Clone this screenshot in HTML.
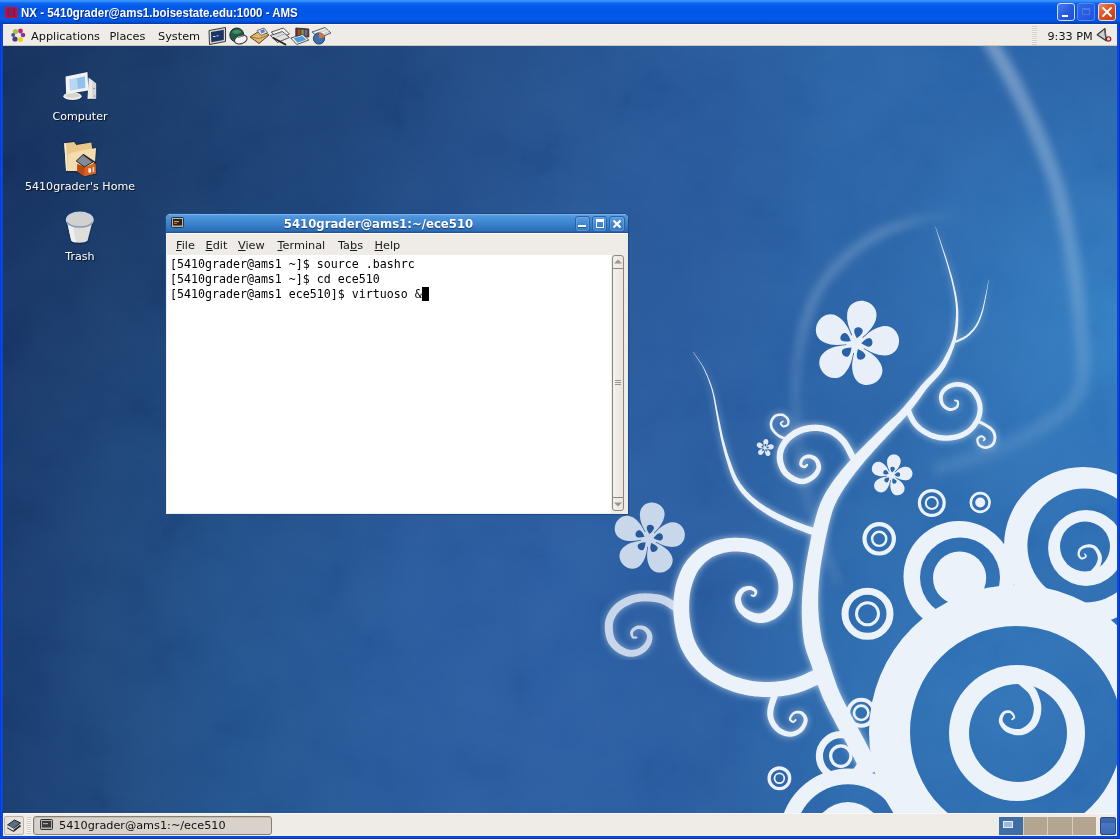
<!DOCTYPE html>
<html lang="en">
<head>
<meta charset="utf-8">
<title>NX - 5410grader@ams1.boisestate.edu:1000 - AMS</title>
<style>
html,body{margin:0;padding:0;}
body{width:1120px;height:839px;overflow:hidden;position:relative;background:#0a3bd0;font-family:"DejaVu Sans","Liberation Sans",sans-serif;}
.abs{position:absolute;}
svg{display:block;}
/* XP outer frame */
#xptitle{left:0;top:0;width:1120px;height:24px;background:linear-gradient(#3b96ff 0,#318af9 1.5px,#0f66ef 3px,#045ae9 6px,#0055e5 12px,#045aec 18px,#0353de 21px,#0243c0 23px,#0138a8 24px);}
#xptitle .t{left:21px;top:5.3px;color:#fff;font:bold 13px "Liberation Sans",sans-serif;white-space:nowrap;text-shadow:1px 1px 0 #0a2a8a;transform:scaleX(0.885);transform-origin:0 0;}
.xb{top:3px;width:18px;height:18px;box-sizing:border-box;border:1px solid #fff;border-radius:3px;}
#frameL{left:0;top:24px;width:3px;height:815px;background:linear-gradient(90deg,#0831d9,#0a4be8 50%,#0a3fd2);}
#frameR{left:1117px;top:24px;width:3px;height:815px;background:linear-gradient(90deg,#0a3fd2,#0a4be8 50%,#0426a8);}
#frameB{left:0;top:836px;width:1120px;height:3px;background:linear-gradient(#0a3fd2,#0a4be8 50%,#0426a8);}
/* desktop */
#desk{left:3px;top:24px;width:1114px;height:812px;overflow:hidden;background:#1d4578;}
#wall{left:-3px;top:-24px;width:1120px;height:839px;}
/* gnome panels */
#ptop{left:3px;top:24px;width:1114px;height:22px;background:#efebe7;box-sizing:border-box;border-top:1px solid #f8f6f4;border-bottom:1px solid #cfc8bf;}
#pbot{left:3px;top:813px;width:1114px;height:23px;background:#efebe7;border-top:1px solid #faf8f6;box-sizing:border-box;}
.ptxt{top:3.6px;font-size:11.3px;line-height:15px;color:#111;white-space:nowrap;}
.dlabel{color:#fff;font-size:11.1px;line-height:14px;white-space:nowrap;text-align:center;width:200px;text-shadow:1px 1px 1px rgba(0,0,0,.75);}
/* terminal window */
#win{left:165px;top:213px;width:463.5px;height:302px;background:#efebe7;border-radius:6px 6px 0 0;box-sizing:border-box;border:1px solid #1d4a84;overflow:hidden;box-shadow:0 0 0 0 #000;}
#wtitle{left:0;top:0;width:462px;height:19px;background:linear-gradient(#9cc4ee 0,#5b9fe2 1px,#4b93db 3px,#3f88d2 8px,#3479c3 13px,#2d6db5 17px,#245b9c 18px,#1f4f8c 19px);}
#wtitle .t{left:0;width:425px;top:2.5px;text-align:center;color:#fff;font-weight:bold;font-size:11.7px;line-height:15px;text-shadow:0 1px 1px #173a6b;}
.wb{top:1.5px;width:15.5px;height:16px;box-sizing:border-box;border:1px solid #2b62a6;border-radius:3px;background:linear-gradient(#5a9de0,#3d82cc 60%,#3a7cc4);box-shadow:inset 0 0 0 1px rgba(140,190,240,.35);}
#wmenu{left:0;top:19px;width:462px;height:23px;background:#efebe7;border-top:1px solid #fff;box-sizing:border-box;}
#wmenu span{position:absolute;top:4px;font-size:11.3px;line-height:15px;color:#1a1a1a;}
#wmenu u{text-decoration:underline;text-underline-offset:1px;}
#term{left:1px;top:41px;width:444.5px;height:258px;background:#fff;}
#term pre{margin:0;position:absolute;left:2.9px;top:2.2px;font:11.63px/14.75px "DejaVu Sans Mono","Liberation Mono",monospace;color:#000;}
#sb{left:445px;top:41px;width:14px;height:258px;background:#efebe7;}
</style>
</head>
<body>
<div id="desk" class="abs"><svg id="wall" class="abs" width="1120" height="839" viewBox="0 0 1120 839">
<!--WALL-->
<defs>
<linearGradient id="bg" gradientUnits="userSpaceOnUse" x1="0" y1="0" x2="1120" y2="0">
<stop offset="0" stop-color="#1b3d70"/><stop offset="0.018" stop-color="#1c3f73"/><stop offset="0.098" stop-color="#214a7f"/><stop offset="0.205" stop-color="#24548f"/><stop offset="0.366" stop-color="#2a5c9e"/><stop offset="0.51" stop-color="#2c5fa3"/><stop offset="0.634" stop-color="#2a5ea1"/><stop offset="0.768" stop-color="#2c66a9"/><stop offset="1" stop-color="#2b65aa"/>
</linearGradient>
<radialGradient id="vg" gradientUnits="userSpaceOnUse" cx="200" cy="0" r="660"><stop offset="0" stop-color="#060a24" stop-opacity="0.27"/><stop offset="0.3" stop-color="#060a24" stop-opacity="0.26"/><stop offset="0.68" stop-color="#060a24" stop-opacity="0.08"/><stop offset="1" stop-color="#060a24" stop-opacity="0"/></radialGradient>
<linearGradient id="sw1" gradientUnits="userSpaceOnUse" x1="1000" y1="40" x2="1030" y2="440"><stop offset="0" stop-color="#fff" stop-opacity="0.34"/><stop offset="0.6" stop-color="#fff" stop-opacity="0.2"/><stop offset="1" stop-color="#fff" stop-opacity="0.09"/></linearGradient>
<linearGradient id="sw2" gradientUnits="userSpaceOnUse" x1="795" y1="425" x2="955" y2="214"><stop offset="0" stop-color="#fff" stop-opacity="0.10"/><stop offset="0.35" stop-color="#fff" stop-opacity="0.2"/><stop offset="0.8" stop-color="#fff" stop-opacity="0.2"/><stop offset="1" stop-color="#fff" stop-opacity="0.02"/></linearGradient>
<radialGradient id="g1" gradientUnits="userSpaceOnUse" cx="1130" cy="330" r="260"><stop offset="0" stop-color="#46aaeb" stop-opacity="0.42"/><stop offset="1" stop-color="#46aaeb" stop-opacity="0"/></radialGradient>
<radialGradient id="g2" gradientUnits="userSpaceOnUse" cx="1000" cy="680" r="300"><stop offset="0" stop-color="#46aaeb" stop-opacity="0.23"/><stop offset="1" stop-color="#46aaeb" stop-opacity="0"/></radialGradient>
<filter id="glow" x="-5%" y="-5%" width="110%" height="110%"><feGaussianBlur stdDeviation="3.8"/></filter>
<filter id="soft" x="-10%" y="-10%" width="120%" height="120%"><feGaussianBlur stdDeviation="4"/></filter>
<filter id="noise" x="0" y="0" width="100%" height="100%"><feTurbulence type="fractalNoise" baseFrequency="0.016" numOctaves="5" seed="11"/><feColorMatrix type="matrix" values="1.6 0 0 0 -0.3  1.6 0 0 0 -0.3  1.6 0 0 0 -0.3  0 0 0 0 1"/></filter>
<mask id="sw" maskUnits="userSpaceOnUse" x="0" y="0" width="1120" height="839"><rect width="1120" height="839" fill="#000"/><circle cx="931.8" cy="503.0" r="12.4" fill="none" stroke="#fff" stroke-width="3.2"/><circle cx="931.8" cy="503.0" r="6.0" fill="none" stroke="#fff" stroke-width="2.0"/><circle cx="980.2" cy="502.5" r="9.4" fill="none" stroke="#fff" stroke-width="2.6"/><circle cx="980.2" cy="502.5" r="5.0" fill="#fff"/><circle cx="879.2" cy="538.8" r="14.7" fill="none" stroke="#fff" stroke-width="4.2"/><circle cx="879.2" cy="538.8" r="7.1" fill="none" stroke="#fff" stroke-width="2.4"/><circle cx="867.5" cy="613.8" r="22.5" fill="none" stroke="#fff" stroke-width="7.0"/><circle cx="867.5" cy="613.8" r="11.0" fill="none" stroke="#fff" stroke-width="3.0"/><circle cx="779.4" cy="778.3" r="10.3" fill="none" stroke="#fff" stroke-width="3.3"/><circle cx="779.4" cy="778.3" r="4.9" fill="none" stroke="#fff" stroke-width="1.8"/><circle cx="840.8" cy="756.1" r="21.4" fill="none" stroke="#fff" stroke-width="7.2"/><circle cx="840.8" cy="756.1" r="10.2" fill="none" stroke="#fff" stroke-width="3.3"/><circle cx="861.2" cy="712.8" r="13.0" fill="none" stroke="#fff" stroke-width="4.0"/><circle cx="861.2" cy="712.8" r="7.2" fill="none" stroke="#fff" stroke-width="2.6"/><circle cx="959.0" cy="576.5" r="55.5" fill="#fff"/><circle cx="960.0" cy="577.5" r="40.0" fill="#000"/><circle cx="959.6" cy="578.0" r="26.6" fill="#fff"/><circle cx="1083.0" cy="546.0" r="79.0" fill="#fff"/><circle cx="1084.4" cy="545.6" r="57.0" fill="#000"/><circle cx="1086.0" cy="548.0" r="37.9" fill="#fff"/><circle cx="1085.0" cy="546.5" r="25.0" fill="#000"/><circle cx="848.0" cy="837.0" r="68.4" fill="#fff"/><circle cx="848.0" cy="837.0" r="52.7" fill="#000"/><circle cx="848.0" cy="837.0" r="35.0" fill="#fff"/><circle cx="1016.0" cy="732.0" r="147.0" fill="#fff"/><circle cx="1016.0" cy="732.0" r="106.0" fill="#000"/><circle cx="1017.0" cy="733.0" r="68.0" fill="#fff"/><circle cx="1018.0" cy="733.0" r="49.0" fill="#000"/><path fill="#fff" d="M1087.9 580.3 L1088.2 580.0 L1088.7 579.6 L1089.2 579.1 L1089.9 578.6 L1090.6 577.9 L1091.4 577.2 L1092.1 576.5 L1092.9 575.8 L1093.6 575.0 L1094.3 574.2 L1095.0 573.4 L1095.6 572.6 L1096.3 571.8 L1097.0 571.0 L1097.7 570.1 L1098.3 569.1 L1098.9 568.2 L1099.5 567.3 L1100.0 566.3 L1100.5 565.3 L1100.8 564.4 L1101.1 563.4 L1101.4 562.5 L1101.6 561.5 L1101.8 560.5 L1101.9 559.6 L1101.9 558.6 L1101.9 557.6 L1101.8 556.6 L1101.6 555.6 L1101.3 554.6 L1100.9 553.5 L1100.4 552.5 L1099.9 551.5 L1099.3 550.5 L1098.7 549.6 L1098.0 548.7 L1097.4 547.8 L1096.6 547.1 L1095.9 546.4 L1095.1 545.8 L1094.3 545.4 L1093.5 545.0 L1092.6 544.7 L1091.7 544.5 L1090.9 544.4 L1090.0 544.3 L1089.2 544.3 L1088.4 544.3 L1087.6 544.4 L1086.7 544.5 L1085.9 544.7 L1085.0 545.0 L1084.1 545.3 L1083.2 545.6 L1082.4 546.0 L1081.6 546.4 L1080.9 546.9 L1080.2 547.4 L1079.6 548.0 L1079.1 548.6 L1078.6 549.3 L1078.3 550.0 L1078.0 550.8 L1077.8 551.5 L1077.6 552.2 L1077.5 553.0 L1077.5 553.7 L1077.5 554.3 L1077.6 555.0 L1077.7 555.6 L1077.9 556.2 L1078.3 556.8 L1078.6 557.3 L1079.0 557.8 L1079.4 558.2 L1079.9 558.6 L1080.4 558.9 L1080.9 559.2 L1081.5 559.4 L1082.1 559.4 L1082.7 559.4 L1083.3 559.2 L1083.9 559.0 L1084.5 558.7 L1085.0 558.4 L1085.5 558.1 L1085.9 557.8 L1086.3 557.5 L1086.6 557.1 L1086.8 556.5 L1086.8 556.0 L1086.7 555.5 L1086.5 555.1 L1086.3 554.8 L1086.0 554.5 L1085.8 554.2 L1085.6 553.9 L1085.5 553.8 L1085.4 553.7 L1084.2 554.3 L1084.3 554.5 L1084.4 554.8 L1084.6 555.0 L1084.8 555.3 L1085.0 555.6 L1085.1 555.8 L1085.2 556.1 L1085.2 556.2 L1085.2 556.2 L1085.2 556.1 L1085.1 556.2 L1084.8 556.4 L1084.5 556.6 L1084.1 556.8 L1083.7 557.1 L1083.2 557.2 L1082.8 557.4 L1082.4 557.4 L1082.1 557.5 L1081.9 557.4 L1081.7 557.3 L1081.5 557.2 L1081.2 557.0 L1080.9 556.7 L1080.6 556.4 L1080.4 556.0 L1080.2 555.7 L1080.0 555.3 L1079.9 555.0 L1079.8 554.6 L1079.8 554.3 L1079.8 553.8 L1079.9 553.2 L1080.0 552.7 L1080.1 552.1 L1080.3 551.6 L1080.6 551.0 L1080.8 550.6 L1081.1 550.2 L1081.4 549.8 L1081.8 549.5 L1082.3 549.2 L1082.9 548.8 L1083.6 548.5 L1084.3 548.2 L1085.0 548.0 L1085.8 547.7 L1086.5 547.6 L1087.2 547.5 L1087.8 547.4 L1088.5 547.4 L1089.1 547.4 L1089.8 547.4 L1090.4 547.5 L1091.1 547.7 L1091.7 547.8 L1092.2 548.0 L1092.8 548.3 L1093.2 548.6 L1093.7 549.0 L1094.2 549.5 L1094.7 550.1 L1095.2 550.8 L1095.7 551.5 L1096.1 552.4 L1096.6 553.2 L1096.9 554.1 L1097.2 554.9 L1097.5 555.7 L1097.6 556.4 L1097.7 557.1 L1097.8 557.8 L1097.8 558.5 L1097.7 559.2 L1097.6 559.9 L1097.4 560.6 L1097.2 561.3 L1096.9 562.0 L1096.7 562.8 L1096.3 563.5 L1096.0 564.2 L1095.6 564.9 L1095.1 565.7 L1094.5 566.4 L1093.9 567.2 L1093.3 568.0 L1092.6 568.7 L1092.0 569.5 L1091.3 570.2 L1090.7 570.8 L1090.1 571.4 L1089.4 571.9 L1088.7 572.5 L1087.9 573.1 L1087.2 573.6 L1086.4 574.1 L1085.7 574.6 L1085.1 575.0 L1084.5 575.4 L1084.1 575.7ZM1084.8 554.0 m-0.7 0 a0.7 0.7 0 1 0 1.4 0 a0.7 0.7 0 1 0 -1.4 0Z M1013.7 680.8 L1014.3 681.2 L1015.1 681.8 L1016.0 682.5 L1016.9 683.2 L1018.0 684.0 L1019.1 684.8 L1020.2 685.6 L1021.2 686.5 L1022.2 687.3 L1023.0 688.0 L1023.9 688.8 L1024.8 689.6 L1025.6 690.3 L1026.4 691.0 L1027.1 691.6 L1027.7 692.3 L1028.3 692.9 L1028.8 693.6 L1029.3 694.3 L1029.8 695.2 L1030.4 696.3 L1030.9 697.5 L1031.5 698.8 L1032.0 700.2 L1032.5 701.6 L1033.0 703.0 L1033.3 704.5 L1033.6 705.9 L1033.8 707.2 L1033.9 708.4 L1033.8 709.7 L1033.7 711.1 L1033.5 712.5 L1033.2 713.9 L1032.9 715.3 L1032.4 716.7 L1032.0 718.0 L1031.4 719.2 L1030.9 720.3 L1030.3 721.3 L1029.6 722.2 L1028.9 723.1 L1028.0 724.1 L1027.1 724.9 L1026.1 725.8 L1025.0 726.5 L1024.0 727.2 L1022.9 727.8 L1021.9 728.3 L1020.9 728.7 L1019.9 728.9 L1018.9 729.0 L1017.7 729.1 L1016.5 729.1 L1015.3 729.0 L1014.0 728.8 L1012.8 728.5 L1011.6 728.2 L1010.6 727.9 L1009.6 727.5 L1008.8 727.1 L1007.9 726.7 L1007.0 726.1 L1006.2 725.4 L1005.4 724.7 L1004.7 724.0 L1004.1 723.2 L1003.5 722.5 L1003.1 721.8 L1002.8 721.2 L1002.7 720.7 L1002.6 720.1 L1002.6 719.4 L1002.7 718.6 L1002.9 717.8 L1003.2 716.9 L1003.5 716.2 L1003.8 715.5 L1004.2 714.9 L1004.5 714.4 L1004.8 714.1 L1005.2 713.8 L1005.7 713.5 L1006.3 713.3 L1006.9 713.1 L1007.5 713.0 L1008.1 712.9 L1008.7 712.9 L1009.2 712.9 L1009.6 713.0 L1009.9 713.1 L1010.4 713.4 L1010.8 713.7 L1011.3 714.2 L1011.8 714.7 L1012.2 715.3 L1012.6 715.8 L1012.9 716.3 L1013.1 716.8 L1013.2 717.0 L1013.3 717.1 L1013.3 717.2 L1013.2 717.3 L1013.0 717.5 L1012.8 717.8 L1012.5 718.0 L1012.2 718.3 L1011.9 718.5 L1011.6 718.7 L1011.5 718.9 L1012.5 720.1 L1012.7 720.0 L1012.9 719.8 L1013.2 719.6 L1013.5 719.4 L1013.9 719.1 L1014.3 718.8 L1014.7 718.4 L1015.0 717.9 L1015.2 717.3 L1015.2 716.6 L1015.0 716.0 L1014.7 715.4 L1014.4 714.7 L1014.0 714.0 L1013.5 713.3 L1013.0 712.7 L1012.5 712.0 L1011.8 711.5 L1011.1 711.0 L1010.4 710.6 L1009.6 710.4 L1008.8 710.3 L1008.0 710.3 L1007.2 710.3 L1006.3 710.4 L1005.4 710.6 L1004.6 710.9 L1003.8 711.3 L1003.0 711.8 L1002.3 712.4 L1001.7 713.1 L1001.1 713.8 L1000.6 714.7 L1000.1 715.6 L999.6 716.6 L999.3 717.7 L999.0 718.8 L998.8 720.0 L998.8 721.2 L999.0 722.4 L999.3 723.5 L999.8 724.6 L1000.4 725.7 L1001.1 726.8 L1001.9 727.9 L1002.8 728.9 L1003.8 730.0 L1004.8 730.9 L1006.0 731.7 L1007.2 732.5 L1008.5 733.1 L1009.8 733.6 L1011.2 734.1 L1012.7 734.6 L1014.3 734.9 L1015.9 735.2 L1017.6 735.3 L1019.2 735.3 L1020.9 735.2 L1022.5 734.9 L1024.1 734.5 L1025.6 733.9 L1027.2 733.2 L1028.7 732.4 L1030.2 731.5 L1031.6 730.5 L1033.0 729.4 L1034.2 728.2 L1035.4 726.9 L1036.5 725.5 L1037.4 724.0 L1038.3 722.4 L1039.0 720.8 L1039.6 719.1 L1040.1 717.3 L1040.6 715.5 L1040.9 713.7 L1041.1 711.9 L1041.3 710.1 L1041.3 708.4 L1041.3 706.6 L1041.1 704.7 L1040.8 702.9 L1040.4 701.1 L1039.9 699.4 L1039.4 697.7 L1038.8 696.0 L1038.2 694.4 L1037.6 693.0 L1037.0 691.6 L1036.3 690.2 L1035.5 689.0 L1034.6 687.8 L1033.8 686.8 L1032.9 685.9 L1032.1 685.0 L1031.2 684.2 L1030.5 683.5 L1029.7 682.7 L1029.0 682.0 L1028.1 681.0 L1027.1 680.0 L1026.1 679.0 L1025.1 678.0 L1024.1 677.0 L1023.1 676.0 L1022.2 675.1 L1021.4 674.4 L1020.8 673.7 L1020.3 673.2ZM1012.0 719.5 m-0.8 0 a0.8 0.8 0 1 0 1.6 0 a0.8 0.8 0 1 0 -1.6 0Z"/></mask><path id="sp" d="M935.2 226.5 L935.5 227.6 L935.9 228.8 L936.4 230.3 L936.9 232.0 L937.5 233.8 L938.1 235.7 L938.7 237.7 L939.4 239.8 L940.0 241.8 L940.6 243.7 L941.2 245.7 L941.9 247.7 L942.5 249.8 L943.2 251.9 L943.8 254.0 L944.5 256.2 L945.2 258.4 L945.8 260.5 L946.5 262.7 L947.1 264.8 L947.7 266.9 L948.3 269.0 L948.9 271.2 L949.5 273.3 L950.0 275.4 L950.6 277.5 L951.1 279.6 L951.6 281.7 L952.1 283.8 L952.6 285.8 L953.0 287.8 L953.4 289.8 L953.8 291.7 L954.1 293.6 L954.5 295.6 L954.8 297.4 L955.0 299.3 L955.3 301.2 L955.5 303.0 L955.7 304.8 L955.8 306.6 L955.9 308.3 L956.0 310.1 L956.0 311.8 L956.0 313.4 L956.0 315.1 L955.9 316.8 L955.8 318.4 L955.7 320.1 L955.6 321.8 L955.4 323.5 L955.3 325.2 L955.1 326.9 L954.8 328.7 L954.6 330.4 L954.3 332.1 L953.9 333.7 L953.6 335.4 L953.2 337.0 L952.8 338.6 L952.3 340.1 L951.8 341.6 L951.3 343.1 L950.7 344.6 L950.1 346.1 L949.5 347.5 L948.8 349.0 L948.1 350.4 L947.4 351.9 L946.7 353.3 L945.9 354.8 L945.1 356.3 L944.3 357.8 L943.5 359.3 L942.7 360.7 L941.8 362.2 L940.9 363.6 L939.9 365.1 L938.8 366.5 L937.8 367.9 L936.6 369.3 L935.3 370.8 L933.9 372.2 L932.5 373.7 L931.0 375.2 L929.4 376.7 L927.9 378.2 L926.4 379.8 L924.8 381.4 L923.4 383.0 L922.0 384.5 L920.7 386.1 L919.4 387.7 L918.2 389.2 L917.0 390.8 L915.8 392.3 L914.6 393.9 L913.4 395.3 L912.2 396.8 L911.0 398.3 L909.8 399.7 L908.5 401.2 L907.3 402.6 L906.1 404.0 L904.9 405.5 L903.7 406.9 L902.5 408.2 L901.3 409.6 L900.1 410.9 L898.9 412.1 L897.8 413.3 L896.7 414.4 L895.6 415.4 L894.5 416.4 L893.4 417.4 L892.3 418.5 L891.0 419.6 L889.7 420.8 L888.3 422.1 L886.8 423.5 L885.1 425.1 L883.3 426.8 L881.4 428.7 L879.4 430.6 L877.4 432.5 L875.3 434.5 L873.3 436.5 L871.3 438.4 L869.4 440.3 L867.6 442.1 L865.9 443.7 L864.3 445.4 L862.7 446.9 L861.2 448.5 L859.7 450.0 L858.3 451.5 L856.8 453.0 L855.4 454.5 L854.0 456.0 L852.6 457.6 L851.2 459.1 L849.8 460.7 L848.4 462.3 L847.0 463.8 L845.6 465.4 L844.3 467.0 L843.0 468.6 L841.7 470.1 L840.5 471.6 L839.2 473.2 L838.1 474.7 L836.9 476.1 L835.8 477.6 L834.7 479.1 L833.6 480.5 L832.5 482.0 L831.5 483.4 L830.5 484.9 L829.5 486.4 L828.5 487.9 L827.6 489.4 L826.7 490.8 L825.9 492.3 L825.0 493.8 L824.2 495.3 L823.4 496.8 L822.7 498.3 L821.9 499.9 L821.2 501.5 L820.5 503.1 L819.8 504.7 L819.2 506.4 L818.6 508.0 L818.1 509.6 L817.5 511.3 L817.0 512.9 L816.5 514.7 L816.0 516.4 L815.5 518.3 L815.0 520.2 L814.5 522.3 L813.9 524.4 L813.4 526.6 L812.9 528.8 L812.4 531.1 L811.9 533.5 L811.4 535.9 L810.9 538.4 L810.4 541.0 L809.9 543.6 L809.4 546.3 L808.8 549.1 L808.2 552.0 L807.7 555.0 L807.1 558.1 L806.5 561.2 L806.0 564.4 L805.5 567.6 L805.0 570.9 L804.5 574.2 L804.1 577.4 L803.7 580.7 L803.4 584.0 L803.0 587.4 L802.7 590.9 L802.4 594.3 L802.1 597.8 L802.0 601.2 L801.8 604.7 L801.8 608.1 L801.7 611.5 L801.8 615.0 L801.9 618.4 L802.0 621.9 L802.2 625.4 L802.4 628.8 L802.7 632.1 L803.1 635.4 L803.5 638.6 L803.9 641.6 L804.5 644.6 L805.2 647.3 L805.9 649.9 L806.6 652.3 L807.4 654.6 L808.2 656.8 L809.1 659.0 L809.9 661.1 L810.7 663.4 L811.6 665.8 L812.4 668.5 L813.4 671.3 L814.3 674.3 L815.4 677.4 L816.4 680.6 L817.5 683.8 L818.6 687.0 L819.8 690.2 L821.0 693.3 L822.2 696.4 L823.5 699.4 L824.9 702.3 L826.3 705.2 L827.7 708.1 L829.1 710.9 L830.5 713.6 L831.9 716.2 L833.3 718.7 L834.5 721.1 L835.7 723.4 L836.9 725.7 L838.0 727.8 L839.1 729.8 L840.1 731.7 L841.2 733.6 L842.2 735.4 L843.2 737.3 L844.2 739.1 L845.2 741.1 L846.3 743.1 L847.4 745.3 L848.6 747.6 L849.9 750.1 L851.1 752.6 L852.4 755.1 L853.7 757.6 L854.9 760.0 L856.0 762.3 L857.1 764.3 L858.0 766.2 L858.9 767.9 L859.7 769.4 L860.5 770.8 L861.2 772.1 L861.9 773.3 L862.4 774.3 L863.0 775.3 L863.4 776.1 L863.8 776.8 L864.1 777.3 L879.9 768.7 L879.5 768.0 L879.2 767.3 L878.7 766.5 L878.2 765.6 L877.6 764.6 L877.0 763.5 L876.4 762.2 L875.6 760.9 L874.8 759.4 L874.0 757.8 L873.0 756.0 L871.9 754.0 L870.7 751.8 L869.5 749.4 L868.2 746.9 L866.8 744.5 L865.5 742.0 L864.2 739.5 L862.9 737.1 L861.7 734.9 L860.6 732.8 L859.5 730.8 L858.5 728.9 L857.5 727.1 L856.5 725.2 L855.5 723.4 L854.5 721.5 L853.5 719.6 L852.4 717.6 L851.3 715.4 L850.0 713.0 L848.7 710.5 L847.4 708.0 L846.0 705.4 L844.6 702.8 L843.3 700.2 L842.0 697.6 L840.7 694.9 L839.5 692.3 L838.4 689.6 L837.3 686.9 L836.2 684.1 L835.2 681.1 L834.2 678.1 L833.1 675.0 L832.2 671.9 L831.2 668.9 L830.3 665.9 L829.3 663.0 L828.4 660.2 L827.6 657.5 L826.7 655.1 L825.9 652.8 L825.1 650.7 L824.4 648.7 L823.8 646.7 L823.2 644.8 L822.7 642.8 L822.1 640.7 L821.7 638.4 L821.2 635.8 L820.7 633.0 L820.3 630.0 L819.8 627.0 L819.5 623.9 L819.1 620.7 L818.8 617.5 L818.6 614.3 L818.4 611.1 L818.2 607.9 L818.2 604.8 L818.1 601.6 L818.2 598.4 L818.2 595.2 L818.3 591.9 L818.5 588.6 L818.7 585.4 L818.9 582.2 L819.2 579.0 L819.5 575.8 L819.8 572.8 L820.1 569.7 L820.6 566.7 L821.0 563.7 L821.5 560.6 L822.0 557.7 L822.6 554.7 L823.1 551.9 L823.6 549.1 L824.1 546.4 L824.6 543.8 L825.1 541.3 L825.6 538.8 L826.1 536.5 L826.6 534.2 L827.1 532.0 L827.6 529.8 L828.1 527.7 L828.5 525.7 L829.0 523.8 L829.5 521.9 L829.9 520.1 L830.4 518.5 L830.8 516.9 L831.2 515.4 L831.6 513.9 L832.0 512.5 L832.5 511.1 L833.0 509.7 L833.5 508.3 L834.0 506.9 L834.6 505.6 L835.2 504.2 L835.8 502.9 L836.5 501.6 L837.1 500.3 L837.8 499.0 L838.5 497.6 L839.3 496.3 L840.1 494.9 L840.9 493.5 L841.7 492.2 L842.5 490.8 L843.4 489.4 L844.3 488.0 L845.3 486.6 L846.3 485.2 L847.3 483.8 L848.3 482.3 L849.4 480.8 L850.4 479.3 L851.6 477.8 L852.7 476.3 L853.9 474.7 L855.1 473.1 L856.3 471.6 L857.6 470.0 L858.9 468.4 L860.1 466.8 L861.4 465.2 L862.7 463.7 L864.0 462.1 L865.3 460.6 L866.6 459.1 L867.9 457.5 L869.3 456.0 L870.7 454.4 L872.1 452.7 L873.6 451.1 L875.2 449.3 L876.9 447.5 L878.6 445.6 L880.5 443.5 L882.4 441.5 L884.3 439.4 L886.3 437.3 L888.1 435.3 L889.9 433.4 L891.6 431.5 L893.2 429.9 L894.6 428.4 L895.9 427.0 L897.1 425.8 L898.2 424.6 L899.3 423.5 L900.4 422.4 L901.5 421.2 L902.6 420.1 L903.7 418.8 L904.9 417.5 L906.1 416.1 L907.2 414.7 L908.4 413.2 L909.6 411.8 L910.8 410.3 L911.9 408.8 L913.1 407.3 L914.3 405.8 L915.4 404.3 L916.6 402.7 L917.8 401.2 L919.0 399.6 L920.1 398.0 L921.2 396.4 L922.4 394.8 L923.5 393.3 L924.6 391.7 L925.8 390.1 L927.0 388.6 L928.2 387.0 L929.5 385.5 L930.8 384.0 L932.3 382.5 L933.7 380.9 L935.2 379.4 L936.7 377.8 L938.2 376.2 L939.6 374.6 L941.0 372.9 L942.2 371.3 L943.4 369.6 L944.4 368.0 L945.4 366.4 L946.3 364.8 L947.1 363.2 L947.9 361.6 L948.6 360.0 L949.4 358.4 L950.1 356.8 L950.7 355.3 L951.4 353.7 L952.0 352.1 L952.6 350.6 L953.2 349.0 L953.8 347.5 L954.3 345.9 L954.8 344.3 L955.2 342.7 L955.7 341.1 L956.0 339.4 L956.4 337.7 L956.7 336.0 L957.0 334.3 L957.3 332.5 L957.5 330.8 L957.7 329.0 L957.8 327.2 L958.0 325.5 L958.1 323.7 L958.2 322.0 L958.3 320.3 L958.3 318.5 L958.3 316.8 L958.3 315.1 L958.3 313.4 L958.3 311.7 L958.2 310.0 L958.1 308.2 L957.9 306.4 L957.7 304.6 L957.5 302.8 L957.3 300.9 L957.0 299.0 L956.7 297.1 L956.3 295.2 L956.0 293.3 L955.6 291.4 L955.1 289.4 L954.7 287.4 L954.2 285.4 L953.7 283.4 L953.2 281.3 L952.7 279.2 L952.1 277.1 L951.5 275.0 L950.9 272.9 L950.2 270.8 L949.6 268.6 L949.0 266.5 L948.3 264.4 L947.7 262.3 L947.0 260.2 L946.3 258.0 L945.6 255.8 L944.9 253.7 L944.1 251.6 L943.4 249.5 L942.7 247.4 L942.0 245.4 L941.4 243.5 L940.7 241.5 L940.0 239.5 L939.3 237.5 L938.6 235.6 L938.0 233.7 L937.3 231.8 L936.8 230.2 L936.2 228.7 L935.8 227.4 L935.4 226.5Z M988.6 279.9 L988.4 280.8 L988.2 281.9 L987.9 283.3 L987.6 284.8 L987.3 286.4 L987.0 288.2 L986.6 289.9 L986.2 291.7 L985.9 293.5 L985.5 295.1 L985.1 296.8 L984.8 298.5 L984.4 300.2 L984.0 302.0 L983.6 303.8 L983.2 305.5 L982.8 307.2 L982.3 308.9 L981.9 310.6 L981.4 312.1 L980.9 313.6 L980.4 315.0 L979.9 316.4 L979.3 317.8 L978.8 319.1 L978.2 320.4 L977.6 321.7 L977.0 322.9 L976.3 324.1 L975.6 325.2 L974.8 326.4 L974.0 327.5 L973.1 328.7 L972.2 329.7 L971.2 330.8 L970.2 331.8 L969.3 332.8 L968.2 333.7 L967.2 334.6 L966.2 335.4 L965.1 336.1 L963.9 336.8 L962.7 337.5 L961.3 338.1 L960.0 338.7 L958.7 339.2 L957.5 339.7 L956.5 340.2 L955.5 340.5 L954.8 340.9 L955.8 342.9 L956.5 342.6 L957.3 342.2 L958.4 341.8 L959.6 341.3 L960.9 340.7 L962.2 340.1 L963.6 339.4 L965.0 338.6 L966.2 337.8 L967.4 337.0 L968.5 336.1 L969.5 335.2 L970.6 334.2 L971.6 333.1 L972.6 332.1 L973.6 330.9 L974.5 329.8 L975.4 328.6 L976.2 327.4 L977.0 326.2 L977.8 324.9 L978.4 323.6 L979.1 322.4 L979.6 321.0 L980.2 319.7 L980.7 318.3 L981.2 316.9 L981.7 315.5 L982.2 314.0 L982.6 312.5 L983.1 310.9 L983.5 309.2 L983.9 307.5 L984.3 305.8 L984.6 304.0 L985.0 302.2 L985.3 300.4 L985.7 298.7 L986.0 296.9 L986.3 295.3 L986.6 293.6 L986.9 291.8 L987.2 290.1 L987.5 288.3 L987.8 286.5 L988.1 284.9 L988.3 283.3 L988.5 282.0 L988.7 280.8 L988.8 279.9Z M693.2 352.3 L693.8 353.3 L694.6 354.5 L695.6 355.9 L696.7 357.5 L697.9 359.3 L699.2 361.2 L700.4 363.1 L701.6 365.1 L702.7 367.0 L703.7 369.0 L704.6 370.9 L705.5 372.9 L706.4 375.0 L707.3 377.1 L708.1 379.3 L708.9 381.5 L709.7 383.7 L710.5 385.9 L711.2 388.2 L711.8 390.5 L712.4 392.7 L713.0 395.1 L713.4 397.4 L713.9 399.8 L714.3 402.2 L714.7 404.7 L715.1 407.1 L715.5 409.5 L715.9 412.0 L716.3 414.4 L716.8 416.8 L717.2 419.2 L717.6 421.6 L718.1 424.0 L718.5 426.4 L718.9 428.9 L719.4 431.3 L719.9 433.6 L720.3 436.0 L720.8 438.3 L721.3 440.5 L721.8 442.8 L722.3 444.9 L722.9 447.1 L723.4 449.3 L723.9 451.4 L724.5 453.5 L725.1 455.7 L725.7 457.8 L726.4 460.0 L727.1 462.2 L727.7 464.4 L728.4 466.6 L729.1 468.9 L729.9 471.2 L730.7 473.4 L731.5 475.6 L732.4 477.8 L733.4 479.9 L734.4 481.9 L735.5 483.9 L736.6 485.8 L737.8 487.6 L739.0 489.4 L740.3 491.2 L741.6 492.9 L743.0 494.6 L744.5 496.2 L746.0 497.8 L747.6 499.5 L749.3 501.1 L751.1 502.7 L752.9 504.3 L754.8 505.9 L756.8 507.4 L758.8 508.9 L760.8 510.3 L762.8 511.7 L764.9 513.1 L766.9 514.5 L769.0 515.7 L771.1 517.0 L773.2 518.2 L775.4 519.3 L777.6 520.5 L779.7 521.6 L781.9 522.6 L784.1 523.7 L786.3 524.7 L788.6 525.7 L791.0 526.8 L793.5 527.9 L796.2 528.9 L798.9 530.0 L801.6 531.0 L804.1 532.0 L806.5 532.9 L808.6 533.7 L810.4 534.3 L811.7 534.9 L814.3 528.1 L812.9 527.6 L811.0 527.0 L808.9 526.2 L806.5 525.4 L804.0 524.5 L801.3 523.6 L798.7 522.6 L796.0 521.6 L793.5 520.6 L791.2 519.7 L789.0 518.7 L786.8 517.8 L784.6 516.8 L782.5 515.8 L780.3 514.8 L778.2 513.8 L776.2 512.7 L774.1 511.6 L772.1 510.5 L770.1 509.3 L768.1 508.1 L766.0 506.9 L764.0 505.6 L762.1 504.2 L760.1 502.9 L758.2 501.5 L756.3 500.1 L754.5 498.6 L752.8 497.2 L751.2 495.7 L749.6 494.2 L748.2 492.8 L746.7 491.3 L745.4 489.8 L744.1 488.2 L742.8 486.6 L741.6 485.0 L740.4 483.4 L739.3 481.6 L738.2 479.9 L737.1 478.0 L736.1 476.1 L735.2 474.1 L734.3 472.0 L733.4 469.8 L732.6 467.7 L731.8 465.5 L731.0 463.3 L730.2 461.1 L729.4 459.0 L728.7 456.9 L728.0 454.8 L727.3 452.7 L726.7 450.6 L726.1 448.5 L725.5 446.4 L724.9 444.3 L724.3 442.1 L723.7 440.0 L723.2 437.7 L722.6 435.5 L722.1 433.2 L721.6 430.8 L721.1 428.4 L720.6 426.1 L720.1 423.6 L719.6 421.2 L719.1 418.8 L718.6 416.4 L718.1 414.0 L717.6 411.6 L717.1 409.2 L716.7 406.8 L716.2 404.4 L715.8 402.0 L715.3 399.6 L714.8 397.2 L714.2 394.8 L713.6 392.4 L713.0 390.1 L712.3 387.9 L711.5 385.6 L710.7 383.3 L709.9 381.1 L709.0 378.9 L708.1 376.8 L707.2 374.6 L706.2 372.6 L705.3 370.6 L704.3 368.6 L703.3 366.7 L702.1 364.7 L700.9 362.8 L699.6 360.9 L698.3 359.0 L697.1 357.3 L696.0 355.7 L694.9 354.3 L694.1 353.1 L693.4 352.1Z M816.0 669.1 L814.6 669.8 L812.7 670.6 L810.6 671.6 L808.2 672.6 L805.7 673.8 L803.1 674.9 L800.6 676.0 L798.0 677.0 L795.7 677.8 L793.6 678.5 L791.5 679.1 L789.4 679.6 L787.4 680.0 L785.3 680.4 L783.2 680.8 L781.1 681.1 L779.0 681.3 L776.9 681.5 L774.8 681.7 L772.5 681.8 L770.3 681.9 L768.0 681.9 L765.8 682.0 L763.5 681.9 L761.2 681.8 L758.9 681.7 L756.7 681.5 L754.4 681.2 L752.2 680.9 L750.0 680.5 L747.7 680.1 L745.5 679.6 L743.2 679.0 L740.9 678.3 L738.6 677.6 L736.3 676.9 L734.0 676.0 L731.8 675.2 L729.7 674.2 L727.6 673.2 L725.5 672.2 L723.3 671.0 L721.2 669.8 L719.2 668.6 L717.1 667.3 L715.2 665.9 L713.3 664.5 L711.5 663.1 L709.8 661.6 L708.2 660.2 L706.6 658.6 L705.1 657.0 L703.7 655.4 L702.4 653.7 L701.1 651.9 L699.8 650.1 L698.7 648.3 L697.6 646.5 L696.6 644.6 L695.7 642.7 L694.9 640.8 L694.1 638.8 L693.4 636.7 L692.8 634.5 L692.2 632.3 L691.7 630.0 L691.2 627.7 L690.8 625.4 L690.4 623.1 L690.1 620.8 L689.8 618.7 L689.5 616.6 L689.4 614.5 L689.2 612.5 L689.2 610.4 L689.1 608.4 L689.1 606.3 L689.2 604.3 L689.2 602.4 L689.3 600.5 L689.5 598.7 L689.6 596.9 L689.8 595.3 L690.0 593.7 L690.3 592.1 L690.6 590.5 L690.9 589.0 L691.3 587.5 L691.7 586.0 L692.2 584.4 L692.7 582.8 L693.3 581.1 L693.8 579.5 L694.5 577.9 L695.1 576.4 L695.8 574.9 L696.5 573.4 L697.3 572.0 L698.1 570.7 L698.9 569.4 L699.9 568.2 L700.9 566.9 L702.0 565.7 L703.1 564.4 L704.3 563.2 L705.6 562.1 L706.9 561.0 L708.2 559.9 L709.5 559.0 L710.7 558.1 L712.0 557.3 L713.4 556.6 L714.8 555.9 L716.2 555.3 L717.7 554.7 L719.2 554.2 L720.8 553.7 L722.4 553.2 L724.0 552.8 L725.6 552.5 L727.2 552.2 L728.8 552.0 L730.5 551.8 L732.1 551.6 L733.8 551.6 L735.5 551.5 L737.2 551.5 L738.9 551.6 L740.6 551.7 L742.2 551.9 L743.8 552.1 L745.4 552.3 L747.0 552.6 L748.5 552.9 L750.1 553.3 L751.5 553.7 L753.0 554.1 L754.4 554.6 L755.8 555.2 L757.1 555.8 L758.3 556.4 L759.6 557.1 L760.9 557.9 L762.2 558.8 L763.5 559.7 L764.7 560.6 L765.9 561.6 L767.1 562.6 L768.1 563.5 L769.1 564.5 L770.0 565.5 L770.9 566.5 L771.7 567.5 L772.4 568.5 L773.1 569.5 L773.8 570.6 L774.4 571.7 L775.0 572.7 L775.5 573.8 L776.0 574.9 L776.4 576.0 L776.8 577.0 L777.1 578.2 L777.5 579.3 L777.7 580.5 L778.0 581.7 L778.1 582.9 L778.3 584.0 L778.4 585.2 L778.5 586.4 L778.5 587.6 L778.4 588.8 L778.4 590.0 L778.3 591.2 L778.1 592.4 L777.9 593.6 L777.7 594.8 L777.4 595.9 L777.1 597.0 L776.7 598.0 L776.3 598.9 L775.9 599.9 L775.3 600.9 L774.7 601.9 L774.1 603.0 L773.4 603.9 L772.6 604.9 L771.9 605.8 L771.1 606.7 L770.4 607.4 L769.6 608.2 L768.8 608.9 L768.0 609.6 L767.1 610.3 L766.2 610.9 L765.3 611.4 L764.5 611.9 L763.6 612.4 L762.7 612.7 L762.0 613.0 L761.2 613.2 L760.4 613.3 L759.5 613.4 L758.6 613.4 L757.7 613.4 L756.8 613.3 L755.8 613.2 L754.9 613.0 L753.9 612.7 L753.0 612.5 L752.1 612.1 L751.1 611.8 L750.1 611.3 L749.1 610.8 L748.1 610.2 L747.2 609.6 L746.3 609.0 L745.5 608.4 L744.8 607.7 L744.1 607.1 L743.6 606.5 L743.1 605.8 L742.6 605.0 L742.2 604.2 L741.9 603.3 L741.6 602.5 L741.3 601.6 L741.2 600.8 L741.1 600.1 L741.0 599.4 L741.0 598.8 L741.1 598.1 L741.2 597.4 L741.5 596.6 L741.8 595.8 L742.1 595.1 L742.5 594.3 L743.0 593.6 L743.4 593.0 L743.8 592.5 L744.2 592.1 L744.7 591.7 L745.3 591.3 L746.0 591.0 L746.7 590.7 L747.4 590.4 L748.1 590.2 L748.8 590.0 L749.4 589.9 L749.9 589.9 L750.3 589.9 L750.8 590.0 L751.3 590.1 L751.9 590.4 L752.5 590.7 L753.0 591.0 L753.5 591.3 L753.9 591.6 L754.2 591.9 L754.4 592.1 L754.4 592.1 L754.5 592.3 L754.5 592.5 L754.5 592.9 L754.4 593.3 L754.2 593.7 L754.0 594.1 L753.8 594.5 L753.7 594.7 L753.6 594.9 L753.7 594.9 L753.7 594.9 L753.6 594.9 L753.4 594.9 L753.1 594.8 L752.8 594.8 L752.5 594.7 L752.2 594.6 L752.0 594.5 L751.7 594.4 L751.3 596.2 L751.4 596.2 L751.6 596.3 L751.8 596.4 L752.2 596.6 L752.5 596.7 L752.9 596.8 L753.4 596.9 L753.9 597.0 L754.5 596.8 L755.0 596.5 L755.4 596.2 L755.7 595.8 L756.1 595.4 L756.4 594.9 L756.7 594.3 L757.0 593.7 L757.2 593.0 L757.3 592.3 L757.3 591.5 L757.0 590.7 L756.7 590.1 L756.2 589.5 L755.7 588.9 L755.1 588.3 L754.4 587.8 L753.7 587.2 L752.9 586.8 L752.0 586.4 L751.1 586.1 L750.1 585.9 L749.2 585.9 L748.2 585.9 L747.3 586.0 L746.3 586.2 L745.2 586.4 L744.2 586.7 L743.2 587.1 L742.2 587.6 L741.3 588.2 L740.4 588.9 L739.6 589.6 L738.8 590.4 L738.1 591.3 L737.4 592.3 L736.8 593.3 L736.2 594.3 L735.7 595.5 L735.3 596.7 L735.0 597.9 L734.8 599.2 L734.8 600.4 L734.8 601.7 L735.0 602.9 L735.3 604.2 L735.7 605.5 L736.1 606.7 L736.6 608.0 L737.2 609.2 L737.9 610.3 L738.7 611.5 L739.5 612.6 L740.5 613.6 L741.5 614.6 L742.6 615.6 L743.7 616.5 L744.9 617.4 L746.1 618.2 L747.3 619.0 L748.6 619.7 L749.8 620.3 L751.1 620.9 L752.3 621.4 L753.6 621.8 L755.0 622.2 L756.4 622.5 L757.8 622.8 L759.3 622.9 L760.8 623.0 L762.3 623.0 L763.8 622.8 L765.4 622.6 L766.9 622.2 L768.4 621.8 L769.9 621.2 L771.3 620.6 L772.8 619.9 L774.2 619.2 L775.6 618.4 L776.9 617.5 L778.2 616.6 L779.5 615.5 L780.7 614.5 L781.9 613.3 L783.1 612.1 L784.2 610.8 L785.3 609.4 L786.3 608.0 L787.3 606.6 L788.2 605.0 L789.1 603.4 L789.8 601.8 L790.5 600.2 L791.0 598.5 L791.5 596.8 L791.9 595.1 L792.3 593.3 L792.5 591.6 L792.7 589.8 L792.9 588.1 L793.0 586.4 L793.0 584.7 L792.9 583.0 L792.8 581.2 L792.6 579.5 L792.3 577.7 L792.0 576.0 L791.5 574.2 L791.0 572.5 L790.5 570.8 L789.8 569.1 L789.1 567.5 L788.3 565.9 L787.4 564.3 L786.5 562.7 L785.5 561.2 L784.4 559.7 L783.3 558.3 L782.1 556.8 L780.8 555.4 L779.5 554.1 L778.1 552.8 L776.6 551.5 L775.1 550.3 L773.5 549.0 L771.9 547.9 L770.2 546.7 L768.4 545.7 L766.6 544.7 L764.8 543.7 L762.9 542.8 L761.1 542.1 L759.2 541.4 L757.3 540.7 L755.3 540.2 L753.4 539.7 L751.4 539.3 L749.5 538.9 L747.5 538.6 L745.5 538.3 L743.6 538.1 L741.6 538.0 L739.6 537.9 L737.5 537.8 L735.5 537.8 L733.4 537.8 L731.3 537.9 L729.2 538.1 L727.1 538.3 L725.0 538.6 L723.0 538.9 L721.0 539.3 L719.0 539.8 L717.0 540.3 L715.0 540.8 L713.0 541.5 L711.1 542.2 L709.1 543.0 L707.1 543.9 L705.2 544.8 L703.3 545.9 L701.4 547.1 L699.6 548.3 L697.8 549.6 L696.1 551.0 L694.4 552.4 L692.8 554.0 L691.2 555.5 L689.7 557.2 L688.2 558.8 L686.9 560.6 L685.6 562.4 L684.3 564.2 L683.2 566.1 L682.2 568.1 L681.2 570.0 L680.3 571.9 L679.5 573.9 L678.8 575.8 L678.1 577.7 L677.4 579.6 L676.8 581.5 L676.3 583.5 L675.7 585.4 L675.3 587.3 L674.9 589.3 L674.6 591.3 L674.3 593.3 L674.0 595.3 L673.8 597.4 L673.7 599.5 L673.5 601.7 L673.5 603.9 L673.4 606.2 L673.4 608.5 L673.4 610.8 L673.5 613.3 L673.7 615.7 L673.9 618.2 L674.2 620.7 L674.5 623.2 L674.9 625.6 L675.4 628.1 L675.8 630.7 L676.4 633.3 L677.0 636.0 L677.7 638.7 L678.5 641.4 L679.4 644.1 L680.4 646.7 L681.5 649.3 L682.8 651.8 L684.1 654.1 L685.5 656.5 L687.0 658.8 L688.6 661.0 L690.2 663.2 L692.0 665.3 L693.8 667.3 L695.7 669.3 L697.6 671.2 L699.7 673.1 L701.9 674.9 L704.1 676.7 L706.5 678.3 L708.8 679.9 L711.2 681.4 L713.7 682.9 L716.1 684.2 L718.6 685.5 L721.0 686.8 L723.5 687.9 L726.1 689.0 L728.7 690.0 L731.3 691.0 L734.0 691.9 L736.6 692.7 L739.3 693.5 L741.9 694.1 L744.6 694.7 L747.2 695.3 L749.9 695.7 L752.5 696.1 L755.2 696.4 L757.8 696.6 L760.5 696.8 L763.1 696.9 L765.7 697.0 L768.2 696.9 L770.8 696.9 L773.3 696.8 L775.7 696.7 L778.2 696.5 L780.6 696.2 L783.1 696.0 L785.5 695.6 L787.9 695.2 L790.4 694.7 L792.8 694.2 L795.3 693.6 L797.8 692.9 L800.5 692.0 L803.4 691.0 L806.2 689.9 L809.1 688.7 L811.8 687.5 L814.4 686.3 L816.8 685.2 L818.9 684.2 L820.7 683.5 L822.0 682.9ZM751.5 595.3 m-0.9 0 a0.9 0.9 0 1 0 1.8 0 a0.9 0.9 0 1 0 -1.8 0Z M772.9 691.0 L772.6 691.9 L772.1 693.2 L771.6 694.8 L771.0 696.6 L770.3 698.5 L769.6 700.5 L769.0 702.5 L768.4 704.5 L768.0 706.4 L767.6 708.1 L767.4 709.6 L767.3 710.9 L767.2 712.3 L767.2 713.6 L767.3 714.9 L767.4 716.1 L767.6 717.4 L767.9 718.6 L768.3 719.8 L768.7 721.0 L769.2 722.2 L769.8 723.5 L770.5 724.7 L771.2 725.9 L772.0 727.1 L772.9 728.2 L773.9 729.3 L774.8 730.3 L775.9 731.3 L776.9 732.1 L778.1 732.9 L779.3 733.7 L780.5 734.3 L781.8 734.9 L783.1 735.5 L784.5 735.9 L785.9 736.3 L787.3 736.6 L788.6 736.8 L790.0 736.8 L791.4 736.7 L792.7 736.5 L794.1 736.2 L795.4 735.8 L796.7 735.2 L797.9 734.7 L799.1 734.0 L800.2 733.3 L801.3 732.5 L802.2 731.7 L803.1 730.7 L804.0 729.7 L804.7 728.5 L805.4 727.3 L806.1 726.1 L806.6 724.9 L807.0 723.6 L807.4 722.4 L807.6 721.2 L807.7 720.1 L807.6 718.9 L807.3 717.8 L806.9 716.7 L806.4 715.7 L805.8 714.8 L805.1 714.0 L804.4 713.2 L803.7 712.6 L803.0 712.0 L802.2 711.5 L801.4 711.1 L800.5 710.9 L799.6 710.7 L798.7 710.7 L797.8 710.7 L796.9 710.7 L796.1 710.9 L795.2 711.1 L794.4 711.4 L793.7 711.7 L793.0 712.2 L792.3 712.8 L791.7 713.4 L791.1 714.1 L790.6 714.8 L790.1 715.6 L789.7 716.3 L789.3 717.1 L789.1 717.8 L788.9 718.5 L788.9 719.2 L789.1 719.9 L789.4 720.5 L789.8 721.0 L790.3 721.5 L790.7 721.9 L791.2 722.3 L791.7 722.6 L792.2 722.8 L792.7 723.0 L793.3 723.0 L793.9 722.8 L794.4 722.5 L794.8 722.2 L795.1 721.9 L795.4 721.6 L795.7 721.3 L796.0 721.0 L796.2 720.8 L796.3 720.7 L795.1 719.3 L794.9 719.5 L794.7 719.7 L794.4 720.0 L794.1 720.3 L793.8 720.5 L793.6 720.7 L793.3 720.9 L793.1 721.0 L793.1 721.0 L793.1 721.0 L793.0 721.0 L792.7 720.8 L792.4 720.6 L792.1 720.3 L791.7 720.0 L791.5 719.7 L791.3 719.4 L791.1 719.1 L791.1 718.9 L791.1 718.7 L791.2 718.4 L791.4 718.0 L791.7 717.4 L792.1 716.8 L792.5 716.2 L793.0 715.6 L793.5 715.1 L794.0 714.6 L794.5 714.3 L794.9 714.1 L795.4 713.9 L795.9 713.7 L796.6 713.6 L797.2 713.5 L797.9 713.5 L798.5 713.6 L799.1 713.7 L799.7 713.8 L800.2 714.0 L800.6 714.3 L801.0 714.6 L801.5 715.1 L801.9 715.6 L802.4 716.2 L802.8 716.8 L803.2 717.5 L803.4 718.2 L803.6 718.8 L803.7 719.4 L803.7 719.9 L803.6 720.6 L803.4 721.4 L803.1 722.3 L802.7 723.2 L802.2 724.2 L801.7 725.2 L801.1 726.1 L800.5 727.0 L799.8 727.7 L799.2 728.3 L798.5 728.9 L797.7 729.4 L796.8 730.0 L795.8 730.4 L794.8 730.8 L793.8 731.2 L792.8 731.5 L791.8 731.7 L790.9 731.8 L790.0 731.8 L789.1 731.7 L788.1 731.6 L787.1 731.3 L786.1 731.0 L785.0 730.6 L784.0 730.2 L783.0 729.6 L782.0 729.1 L781.1 728.5 L780.3 727.9 L779.5 727.2 L778.7 726.5 L778.0 725.6 L777.3 724.8 L776.6 723.8 L776.0 722.9 L775.4 721.9 L774.9 720.9 L774.5 719.9 L774.1 719.0 L773.8 718.1 L773.6 717.2 L773.4 716.3 L773.3 715.4 L773.3 714.5 L773.3 713.6 L773.3 712.6 L773.4 711.5 L773.6 710.4 L773.8 709.1 L774.0 707.8 L774.5 706.2 L775.0 704.4 L775.7 702.5 L776.3 700.6 L777.0 698.8 L777.6 697.0 L778.2 695.4 L778.7 694.1 L779.1 693.0ZM795.7 720.0 m-0.9 0 a0.9 0.9 0 1 0 1.8 0 a0.9 0.9 0 1 0 -1.8 0Z M905.5 411.2 L905.8 411.9 L906.2 412.8 L906.7 413.9 L907.2 415.2 L907.8 416.6 L908.5 418.1 L909.2 419.5 L910.0 421.0 L910.7 422.3 L911.5 423.6 L912.3 424.6 L913.1 425.7 L914.0 426.6 L914.8 427.6 L915.7 428.5 L916.6 429.3 L917.6 430.2 L918.6 431.0 L919.6 431.7 L920.6 432.5 L921.8 433.3 L922.9 434.0 L924.1 434.7 L925.4 435.4 L926.6 436.1 L927.9 436.7 L929.3 437.4 L930.6 437.9 L931.9 438.4 L933.3 438.9 L934.6 439.3 L936.0 439.6 L937.4 439.9 L938.8 440.2 L940.2 440.4 L941.6 440.6 L943.0 440.7 L944.5 440.8 L945.9 440.8 L947.3 440.8 L948.7 440.7 L950.1 440.6 L951.5 440.5 L952.9 440.3 L954.4 440.1 L955.8 439.8 L957.2 439.5 L958.6 439.1 L959.9 438.7 L961.2 438.2 L962.5 437.7 L963.8 437.2 L965.0 436.6 L966.2 435.9 L967.4 435.2 L968.6 434.5 L969.7 433.7 L970.8 432.8 L971.8 431.9 L972.8 431.0 L973.8 430.0 L974.7 429.0 L975.7 427.9 L976.5 426.7 L977.3 425.5 L978.1 424.3 L978.8 423.1 L979.5 421.9 L980.1 420.6 L980.6 419.4 L981.1 418.1 L981.5 416.8 L981.8 415.5 L982.1 414.2 L982.4 412.9 L982.5 411.6 L982.6 410.3 L982.7 408.9 L982.6 407.6 L982.5 406.2 L982.4 404.9 L982.1 403.5 L981.8 402.2 L981.4 400.8 L980.9 399.4 L980.4 398.1 L979.8 396.8 L979.2 395.6 L978.6 394.4 L977.9 393.3 L977.2 392.2 L976.4 391.2 L975.6 390.2 L974.7 389.2 L973.7 388.3 L972.8 387.5 L971.8 386.7 L970.8 386.0 L969.7 385.3 L968.6 384.7 L967.5 384.1 L966.3 383.7 L965.1 383.3 L963.9 382.9 L962.7 382.6 L961.4 382.4 L960.2 382.2 L959.0 382.1 L957.8 382.1 L956.6 382.1 L955.5 382.2 L954.3 382.3 L953.2 382.5 L952.1 382.8 L951.0 383.2 L949.9 383.5 L948.8 384.0 L947.8 384.5 L946.9 385.0 L946.0 385.6 L945.1 386.2 L944.3 386.9 L943.5 387.6 L942.7 388.4 L942.0 389.2 L941.3 390.1 L940.7 391.0 L940.2 392.0 L939.7 393.0 L939.4 394.0 L939.2 395.1 L939.0 396.2 L939.0 397.4 L939.0 398.5 L939.2 399.7 L939.4 400.8 L939.6 401.9 L940.0 403.0 L940.4 404.0 L940.9 405.0 L941.5 405.8 L942.2 406.7 L942.9 407.5 L943.8 408.2 L944.7 408.9 L945.6 409.4 L946.5 410.0 L947.4 410.4 L948.4 410.7 L949.3 411.0 L950.3 411.1 L951.2 411.0 L952.2 410.8 L953.1 410.6 L954.0 410.3 L954.9 409.9 L955.6 409.4 L956.4 409.0 L957.0 408.5 L957.6 408.0 L958.1 407.4 L958.5 406.7 L958.7 406.0 L958.9 405.2 L959.1 404.5 L959.1 403.8 L959.1 403.1 L959.1 402.5 L959.0 401.9 L958.9 401.4 L958.6 400.8 L958.2 400.4 L957.7 400.1 L957.2 399.9 L956.7 399.8 L956.3 399.8 L955.9 399.7 L955.6 399.7 L955.4 399.7 L955.2 399.6 L954.8 401.4 L955.0 401.4 L955.3 401.5 L955.7 401.6 L956.0 401.6 L956.3 401.7 L956.6 401.8 L956.8 401.9 L956.9 402.0 L956.9 402.0 L956.9 402.0 L956.9 402.2 L956.9 402.6 L956.9 403.1 L956.9 403.6 L956.8 404.1 L956.7 404.7 L956.5 405.2 L956.3 405.6 L956.1 405.9 L955.8 406.2 L955.5 406.5 L955.0 406.8 L954.4 407.1 L953.7 407.4 L953.0 407.7 L952.3 407.9 L951.6 408.1 L951.0 408.1 L950.4 408.1 L949.9 408.0 L949.3 407.8 L948.7 407.6 L948.0 407.2 L947.3 406.7 L946.6 406.2 L945.9 405.7 L945.3 405.1 L944.7 404.5 L944.3 403.8 L943.9 403.2 L943.6 402.6 L943.4 401.9 L943.2 401.0 L943.0 400.2 L942.9 399.2 L942.8 398.3 L942.9 397.4 L942.9 396.6 L943.0 395.8 L943.2 395.2 L943.5 394.5 L943.8 393.9 L944.2 393.2 L944.7 392.6 L945.2 392.0 L945.8 391.3 L946.4 390.8 L947.1 390.2 L947.7 389.7 L948.4 389.2 L949.1 388.8 L949.9 388.4 L950.6 388.1 L951.5 387.7 L952.3 387.4 L953.2 387.2 L954.1 387.0 L955.0 386.8 L955.9 386.7 L956.8 386.7 L957.7 386.7 L958.7 386.8 L959.6 386.9 L960.7 387.0 L961.7 387.2 L962.7 387.5 L963.7 387.8 L964.6 388.1 L965.5 388.5 L966.4 388.9 L967.2 389.4 L968.0 389.9 L968.8 390.5 L969.6 391.2 L970.4 391.9 L971.1 392.6 L971.8 393.4 L972.5 394.2 L973.1 395.1 L973.7 395.9 L974.2 396.9 L974.8 397.9 L975.3 398.9 L975.7 400.0 L976.2 401.1 L976.5 402.3 L976.9 403.4 L977.1 404.6 L977.3 405.7 L977.5 406.8 L977.5 407.8 L977.6 408.9 L977.5 410.0 L977.4 411.0 L977.3 412.1 L977.1 413.2 L976.8 414.3 L976.5 415.4 L976.2 416.4 L975.8 417.4 L975.3 418.5 L974.8 419.5 L974.3 420.5 L973.6 421.6 L973.0 422.6 L972.3 423.6 L971.5 424.6 L970.8 425.5 L970.0 426.4 L969.2 427.2 L968.3 428.0 L967.5 428.7 L966.5 429.4 L965.6 430.0 L964.6 430.6 L963.6 431.2 L962.6 431.8 L961.5 432.3 L960.4 432.7 L959.4 433.2 L958.2 433.6 L957.1 433.9 L955.9 434.2 L954.7 434.5 L953.4 434.8 L952.2 435.0 L950.9 435.1 L949.6 435.3 L948.4 435.4 L947.1 435.4 L945.9 435.4 L944.7 435.4 L943.4 435.3 L942.2 435.2 L940.9 435.0 L939.7 434.9 L938.5 434.6 L937.3 434.4 L936.1 434.1 L934.9 433.7 L933.8 433.3 L932.6 432.9 L931.4 432.4 L930.2 431.9 L929.1 431.3 L927.9 430.7 L926.8 430.1 L925.8 429.4 L924.7 428.8 L923.8 428.1 L922.8 427.4 L921.9 426.7 L921.1 426.0 L920.3 425.3 L919.5 424.6 L918.8 423.8 L918.1 423.0 L917.4 422.2 L916.7 421.3 L916.1 420.4 L915.4 419.5 L914.8 418.3 L914.2 417.1 L913.5 415.7 L912.9 414.4 L912.3 413.0 L911.8 411.7 L911.3 410.6 L910.9 409.6 L910.5 408.8ZM955.0 400.5 m-0.9 0 a0.9 0.9 0 1 0 1.8 0 a0.9 0.9 0 1 0 -1.8 0Z M976.4 422.4 L976.9 422.6 L977.6 422.9 L978.3 423.2 L979.2 423.6 L980.1 424.0 L981.1 424.5 L982.1 424.9 L983.0 425.4 L983.9 425.8 L984.6 426.3 L985.4 426.8 L986.2 427.2 L987.0 427.7 L987.7 428.2 L988.5 428.7 L989.2 429.2 L989.8 429.7 L990.4 430.2 L990.9 430.7 L991.3 431.2 L991.7 431.8 L992.1 432.3 L992.4 433.0 L992.6 433.6 L992.9 434.2 L993.1 434.9 L993.2 435.6 L993.4 436.2 L993.4 436.9 L993.4 437.5 L993.4 438.1 L993.4 438.8 L993.3 439.5 L993.1 440.2 L992.9 440.9 L992.7 441.5 L992.4 442.2 L992.1 442.7 L991.8 443.2 L991.5 443.6 L991.1 444.0 L990.6 444.4 L990.0 444.8 L989.4 445.2 L988.7 445.5 L988.0 445.8 L987.3 446.0 L986.6 446.2 L986.0 446.3 L985.4 446.3 L984.8 446.3 L984.2 446.2 L983.6 446.0 L982.9 445.8 L982.3 445.5 L981.6 445.2 L981.0 444.9 L980.5 444.5 L980.1 444.2 L979.7 443.8 L979.4 443.5 L979.2 443.0 L979.0 442.5 L978.8 442.0 L978.7 441.4 L978.6 440.8 L978.5 440.3 L978.5 439.8 L978.6 439.4 L978.6 439.1 L978.7 438.9 L978.9 438.7 L979.2 438.4 L979.5 438.2 L979.9 437.9 L980.3 437.7 L980.8 437.5 L981.2 437.4 L981.5 437.3 L981.8 437.3 L981.9 437.3 L982.1 437.4 L982.4 437.5 L982.7 437.7 L983.0 437.9 L983.3 438.2 L983.5 438.5 L983.7 438.7 L983.9 438.9 L984.0 439.0 L984.0 438.9 L984.0 438.9 L984.0 438.9 L983.9 439.0 L983.8 439.2 L983.6 439.3 L983.5 439.5 L983.3 439.7 L983.1 439.8 L983.0 440.0 L984.2 441.0 L984.3 441.0 L984.4 440.9 L984.6 440.7 L984.8 440.5 L985.0 440.3 L985.2 440.1 L985.5 439.8 L985.6 439.4 L985.7 438.9 L985.6 438.4 L985.5 438.0 L985.2 437.6 L985.0 437.3 L984.6 436.9 L984.3 436.5 L983.9 436.2 L983.4 435.9 L982.9 435.6 L982.4 435.4 L981.8 435.3 L981.3 435.3 L980.7 435.4 L980.1 435.6 L979.5 435.8 L979.0 436.0 L978.4 436.4 L977.8 436.7 L977.3 437.2 L976.9 437.7 L976.6 438.3 L976.4 439.0 L976.3 439.6 L976.3 440.3 L976.3 441.1 L976.4 441.8 L976.6 442.6 L976.8 443.3 L977.1 444.1 L977.4 444.8 L977.9 445.4 L978.4 445.9 L979.0 446.5 L979.7 446.9 L980.4 447.4 L981.2 447.8 L982.0 448.1 L982.8 448.4 L983.7 448.7 L984.5 448.8 L985.4 448.9 L986.2 448.9 L987.1 448.7 L988.0 448.6 L988.9 448.3 L989.7 448.0 L990.6 447.6 L991.4 447.2 L992.2 446.7 L992.9 446.2 L993.5 445.6 L994.1 444.9 L994.6 444.2 L995.0 443.4 L995.4 442.6 L995.7 441.7 L995.9 440.9 L996.1 440.0 L996.2 439.2 L996.3 438.3 L996.4 437.5 L996.3 436.7 L996.3 435.8 L996.1 435.0 L995.9 434.2 L995.7 433.3 L995.4 432.5 L995.1 431.7 L994.7 430.9 L994.2 430.1 L993.7 429.4 L993.1 428.7 L992.4 428.0 L991.7 427.4 L991.0 426.8 L990.2 426.2 L989.4 425.7 L988.6 425.2 L987.8 424.7 L987.0 424.2 L986.2 423.7 L985.3 423.2 L984.4 422.7 L983.4 422.2 L982.4 421.8 L981.4 421.3 L980.4 420.9 L979.5 420.5 L978.8 420.2 L978.1 419.9 L977.6 419.6ZM983.6 440.5 m-0.8 0 a0.8 0.8 0 1 0 1.6 0 a0.8 0.8 0 1 0 -1.6 0Z M855.8 456.5 L855.4 455.7 L854.9 454.7 L854.3 453.4 L853.5 451.9 L852.8 450.3 L851.9 448.6 L851.0 447.0 L850.1 445.4 L849.2 443.9 L848.3 442.5 L847.5 441.3 L846.6 440.1 L845.8 439.0 L844.9 438.0 L843.9 437.0 L843.0 436.0 L842.0 435.1 L841.0 434.1 L840.0 433.3 L838.9 432.4 L837.8 431.6 L836.7 430.9 L835.5 430.1 L834.3 429.5 L833.1 428.8 L831.8 428.2 L830.5 427.6 L829.2 427.1 L827.9 426.6 L826.6 426.2 L825.3 425.9 L823.9 425.5 L822.5 425.3 L821.1 425.1 L819.7 424.9 L818.3 424.8 L816.9 424.7 L815.5 424.6 L814.1 424.7 L812.7 424.7 L811.3 424.8 L809.9 424.9 L808.5 425.1 L807.1 425.4 L805.7 425.6 L804.3 426.0 L802.9 426.3 L801.5 426.7 L800.1 427.2 L798.8 427.7 L797.5 428.3 L796.1 428.9 L794.8 429.6 L793.5 430.3 L792.2 431.1 L791.0 431.9 L789.8 432.8 L788.6 433.7 L787.5 434.6 L786.4 435.6 L785.4 436.6 L784.4 437.7 L783.5 438.8 L782.6 440.0 L781.7 441.2 L781.0 442.4 L780.2 443.7 L779.6 444.9 L779.0 446.2 L778.5 447.5 L778.0 448.7 L777.6 450.0 L777.3 451.3 L777.1 452.6 L776.9 453.9 L776.8 455.2 L776.7 456.5 L776.7 457.8 L776.8 459.1 L776.9 460.4 L777.1 461.7 L777.4 463.0 L777.8 464.4 L778.2 465.7 L778.7 467.0 L779.2 468.3 L779.8 469.6 L780.4 470.8 L781.1 472.0 L781.8 473.1 L782.6 474.2 L783.5 475.2 L784.4 476.1 L785.4 477.0 L786.4 477.8 L787.4 478.6 L788.4 479.3 L789.5 480.0 L790.5 480.6 L791.5 481.2 L792.6 481.7 L793.6 482.2 L794.7 482.6 L795.8 483.1 L797.0 483.4 L798.2 483.7 L799.4 484.0 L800.6 484.1 L801.9 484.2 L803.1 484.1 L804.4 484.0 L805.6 483.7 L806.9 483.3 L808.1 482.9 L809.3 482.3 L810.4 481.8 L811.5 481.1 L812.6 480.5 L813.6 479.8 L814.5 479.0 L815.4 478.2 L816.3 477.4 L817.1 476.5 L817.9 475.5 L818.6 474.5 L819.2 473.5 L819.8 472.4 L820.3 471.3 L820.7 470.2 L821.0 469.1 L821.1 467.9 L821.1 466.8 L821.0 465.6 L820.8 464.5 L820.5 463.4 L820.1 462.3 L819.7 461.3 L819.2 460.4 L818.7 459.5 L818.1 458.7 L817.4 457.9 L816.6 457.2 L815.8 456.6 L814.9 456.1 L814.0 455.7 L813.1 455.3 L812.1 455.0 L811.2 454.8 L810.4 454.6 L809.5 454.5 L808.6 454.5 L807.7 454.6 L806.8 454.7 L806.0 455.0 L805.2 455.3 L804.4 455.6 L803.7 456.0 L803.0 456.4 L802.4 456.9 L801.8 457.4 L801.2 458.0 L800.8 458.7 L800.3 459.4 L800.0 460.1 L799.7 460.9 L799.5 461.6 L799.3 462.4 L799.2 463.1 L799.2 463.8 L799.2 464.6 L799.5 465.3 L799.9 466.0 L800.3 466.5 L800.9 466.9 L801.4 467.3 L802.0 467.6 L802.5 467.9 L803.1 468.1 L803.6 468.3 L804.2 468.3 L804.9 468.3 L805.5 468.1 L806.0 467.8 L806.4 467.4 L806.8 467.1 L807.1 466.7 L807.3 466.4 L807.5 466.2 L807.7 466.0 L807.8 465.9 L806.2 464.1 L806.0 464.3 L805.8 464.5 L805.5 464.8 L805.3 465.0 L805.0 465.3 L804.8 465.5 L804.5 465.6 L804.4 465.7 L804.4 465.7 L804.4 465.7 L804.3 465.6 L804.0 465.5 L803.7 465.4 L803.3 465.2 L803.0 464.9 L802.7 464.7 L802.4 464.5 L802.3 464.2 L802.2 464.1 L802.2 464.0 L802.2 463.8 L802.2 463.5 L802.3 463.0 L802.5 462.5 L802.6 462.0 L802.9 461.4 L803.2 460.9 L803.4 460.5 L803.7 460.1 L804.0 459.8 L804.4 459.5 L804.8 459.3 L805.3 459.0 L805.8 458.8 L806.4 458.6 L807.0 458.4 L807.6 458.3 L808.1 458.3 L808.6 458.2 L809.1 458.3 L809.7 458.4 L810.3 458.6 L810.9 458.8 L811.6 459.0 L812.2 459.4 L812.9 459.7 L813.4 460.1 L814.0 460.5 L814.4 460.9 L814.7 461.3 L815.0 461.8 L815.3 462.4 L815.6 463.1 L815.9 463.8 L816.1 464.6 L816.3 465.4 L816.4 466.1 L816.4 466.9 L816.4 467.5 L816.2 468.1 L816.1 468.7 L815.8 469.4 L815.4 470.1 L815.0 470.9 L814.5 471.6 L813.9 472.4 L813.3 473.1 L812.6 473.8 L811.9 474.4 L811.3 475.0 L810.5 475.5 L809.7 476.0 L808.9 476.6 L808.0 477.0 L807.1 477.5 L806.1 477.8 L805.2 478.2 L804.3 478.4 L803.5 478.6 L802.7 478.7 L801.9 478.7 L801.2 478.6 L800.3 478.5 L799.5 478.3 L798.6 478.0 L797.8 477.7 L796.9 477.3 L796.0 476.9 L795.1 476.5 L794.3 476.0 L793.4 475.6 L792.6 475.0 L791.7 474.5 L790.9 473.9 L790.1 473.2 L789.3 472.6 L788.6 471.9 L787.9 471.2 L787.3 470.4 L786.8 469.7 L786.2 468.9 L785.7 468.0 L785.2 467.0 L784.8 466.0 L784.4 464.9 L784.0 463.8 L783.7 462.7 L783.4 461.6 L783.2 460.6 L783.1 459.6 L783.0 458.6 L782.9 457.6 L782.9 456.6 L783.0 455.6 L783.1 454.6 L783.2 453.6 L783.4 452.7 L783.7 451.7 L784.0 450.7 L784.3 449.7 L784.7 448.8 L785.2 447.8 L785.8 446.8 L786.4 445.8 L787.0 444.8 L787.7 443.8 L788.4 442.8 L789.2 441.9 L790.0 441.0 L790.8 440.2 L791.7 439.4 L792.6 438.7 L793.6 437.9 L794.6 437.2 L795.6 436.5 L796.7 435.9 L797.8 435.3 L799.0 434.7 L800.1 434.1 L801.2 433.7 L802.3 433.2 L803.5 432.8 L804.6 432.5 L805.8 432.2 L807.0 431.9 L808.2 431.7 L809.5 431.5 L810.7 431.3 L811.9 431.2 L813.1 431.1 L814.3 431.0 L815.5 431.0 L816.7 431.1 L817.9 431.1 L819.1 431.3 L820.2 431.4 L821.4 431.6 L822.6 431.8 L823.7 432.1 L824.8 432.4 L825.9 432.7 L827.0 433.1 L828.0 433.5 L829.1 434.0 L830.2 434.5 L831.2 435.1 L832.2 435.6 L833.2 436.3 L834.2 436.9 L835.1 437.6 L836.0 438.3 L836.8 439.0 L837.7 439.7 L838.5 440.5 L839.3 441.3 L840.0 442.2 L840.8 443.1 L841.6 444.1 L842.3 445.1 L843.1 446.1 L843.8 447.2 L844.6 448.6 L845.4 450.0 L846.2 451.6 L847.0 453.2 L847.8 454.7 L848.5 456.2 L849.2 457.5 L849.7 458.6 L850.2 459.5ZM807.0 465.0 m-1.2 0 a1.2 1.2 0 1 0 2.4 0 a1.2 1.2 0 1 0 -2.4 0Z M788.5 438.2 L787.9 438.0 L787.1 437.7 L786.2 437.4 L785.2 437.1 L784.2 436.7 L783.1 436.4 L782.0 435.9 L781.0 435.5 L780.1 435.0 L779.3 434.6 L778.6 434.1 L777.9 433.5 L777.1 432.8 L776.4 432.2 L775.7 431.5 L775.1 430.8 L774.5 430.0 L774.0 429.3 L773.5 428.7 L773.2 428.0 L772.9 427.4 L772.7 426.8 L772.5 426.1 L772.4 425.5 L772.3 424.8 L772.3 424.2 L772.3 423.6 L772.4 422.9 L772.5 422.3 L772.6 421.8 L772.8 421.2 L773.1 420.6 L773.4 420.1 L773.7 419.5 L774.1 418.9 L774.5 418.4 L775.0 417.9 L775.4 417.5 L775.9 417.1 L776.3 416.8 L776.8 416.6 L777.4 416.4 L778.0 416.2 L778.7 416.1 L779.4 416.0 L780.1 416.0 L780.8 416.0 L781.4 416.0 L782.0 416.1 L782.5 416.2 L783.0 416.4 L783.5 416.6 L784.0 416.9 L784.5 417.3 L785.0 417.7 L785.5 418.1 L785.9 418.6 L786.3 419.1 L786.6 419.5 L786.8 419.9 L787.0 420.2 L787.1 420.6 L787.2 421.0 L787.3 421.5 L787.3 421.9 L787.3 422.4 L787.3 422.8 L787.2 423.2 L787.1 423.5 L787.0 423.7 L786.8 423.9 L786.6 424.2 L786.3 424.4 L785.9 424.7 L785.5 424.9 L785.1 425.1 L784.6 425.2 L784.2 425.3 L783.9 425.4 L783.7 425.4 L783.5 425.4 L783.3 425.3 L783.0 425.1 L782.7 424.9 L782.4 424.6 L782.2 424.3 L781.9 424.0 L781.7 423.8 L781.6 423.6 L781.6 423.5 L781.6 423.6 L781.6 423.6 L781.7 423.4 L781.9 423.2 L782.1 423.0 L782.4 422.8 L782.7 422.6 L783.0 422.4 L783.2 422.2 L783.4 422.0 L782.4 420.8 L782.3 420.9 L782.1 421.0 L781.8 421.2 L781.4 421.4 L781.1 421.7 L780.8 421.9 L780.4 422.2 L780.1 422.6 L779.9 423.1 L779.8 423.7 L779.9 424.2 L780.1 424.6 L780.4 425.1 L780.7 425.5 L781.1 425.9 L781.5 426.3 L781.9 426.7 L782.4 427.0 L782.9 427.3 L783.5 427.4 L784.1 427.4 L784.6 427.3 L785.2 427.2 L785.8 427.0 L786.4 426.8 L786.9 426.5 L787.5 426.2 L788.0 425.8 L788.5 425.4 L788.8 424.9 L789.1 424.4 L789.3 423.8 L789.5 423.2 L789.6 422.6 L789.6 422.0 L789.6 421.3 L789.6 420.7 L789.4 420.0 L789.2 419.4 L789.0 418.7 L788.6 418.2 L788.2 417.6 L787.8 417.0 L787.2 416.4 L786.7 415.9 L786.1 415.4 L785.4 414.9 L784.7 414.4 L784.0 414.1 L783.3 413.8 L782.5 413.6 L781.7 413.5 L780.9 413.4 L780.0 413.4 L779.1 413.5 L778.3 413.6 L777.4 413.7 L776.6 413.9 L775.8 414.2 L775.1 414.6 L774.4 415.0 L773.7 415.5 L773.1 416.1 L772.5 416.7 L772.0 417.4 L771.5 418.1 L771.1 418.8 L770.7 419.5 L770.4 420.3 L770.2 421.0 L770.0 421.8 L769.8 422.6 L769.7 423.4 L769.7 424.2 L769.7 425.0 L769.8 425.8 L770.0 426.7 L770.2 427.5 L770.5 428.4 L770.8 429.2 L771.3 430.0 L771.8 430.8 L772.4 431.6 L773.1 432.5 L773.8 433.3 L774.5 434.0 L775.3 434.8 L776.1 435.5 L777.0 436.2 L777.9 436.8 L778.8 437.4 L779.9 438.0 L781.0 438.5 L782.1 438.9 L783.3 439.3 L784.3 439.7 L785.3 440.1 L786.2 440.4 L787.0 440.6 L787.5 440.8ZM782.9 421.4 m-0.8 0 a0.8 0.8 0 1 0 1.6 0 a0.8 0.8 0 1 0 -1.6 0Z"/><path id="spd" d="M682.3 606.4 L681.4 605.9 L680.2 605.1 L678.8 604.2 L677.2 603.1 L675.4 602.0 L673.6 600.9 L671.8 599.8 L670.0 598.7 L668.3 597.8 L666.8 597.0 L665.3 596.4 L664.0 595.9 L662.8 595.5 L661.5 595.1 L660.4 594.9 L659.2 594.6 L658.1 594.5 L657.1 594.3 L656.0 594.2 L654.8 594.0 L653.6 593.9 L652.3 593.7 L650.9 593.6 L649.5 593.5 L648.2 593.4 L646.8 593.4 L645.3 593.3 L643.9 593.4 L642.5 593.4 L641.2 593.5 L639.8 593.6 L638.5 593.8 L637.3 594.0 L636.0 594.2 L634.7 594.5 L633.4 594.8 L632.1 595.1 L630.8 595.5 L629.5 596.0 L628.2 596.5 L626.9 597.0 L625.6 597.6 L624.2 598.3 L622.9 599.0 L621.5 599.7 L620.2 600.5 L618.9 601.4 L617.6 602.3 L616.4 603.2 L615.2 604.2 L614.1 605.3 L613.0 606.4 L612.0 607.6 L611.1 608.8 L610.2 610.0 L609.4 611.3 L608.6 612.6 L607.9 613.8 L607.3 615.1 L606.7 616.3 L606.2 617.6 L605.8 618.9 L605.5 620.1 L605.2 621.4 L605.0 622.7 L604.9 623.9 L604.8 625.1 L604.8 626.3 L604.8 627.6 L604.8 628.8 L604.9 630.0 L605.0 631.3 L605.2 632.7 L605.4 634.0 L605.6 635.4 L606.0 636.8 L606.3 638.2 L606.8 639.5 L607.3 640.9 L607.9 642.1 L608.6 643.4 L609.3 644.5 L610.1 645.6 L611.0 646.7 L611.9 647.7 L612.8 648.7 L613.8 649.6 L614.8 650.5 L615.8 651.3 L616.9 652.0 L618.0 652.7 L619.1 653.4 L620.3 654.0 L621.5 654.6 L622.8 655.2 L624.1 655.6 L625.4 656.0 L626.7 656.4 L628.0 656.6 L629.4 656.8 L630.7 656.8 L632.0 656.8 L633.3 656.7 L634.7 656.5 L635.9 656.2 L637.2 655.9 L638.5 655.5 L639.7 655.1 L640.8 654.5 L641.9 654.0 L643.0 653.3 L644.1 652.5 L645.1 651.7 L646.1 650.9 L647.0 649.9 L647.8 649.0 L648.6 648.0 L649.3 647.1 L649.9 646.1 L650.5 645.1 L651.0 644.0 L651.4 643.0 L651.8 641.9 L652.0 640.8 L652.2 639.7 L652.4 638.7 L652.4 637.6 L652.4 636.5 L652.3 635.5 L652.0 634.4 L651.7 633.4 L651.3 632.5 L650.8 631.5 L650.2 630.7 L649.5 629.9 L648.9 629.1 L648.1 628.4 L647.4 627.8 L646.6 627.2 L645.8 626.8 L645.0 626.3 L644.1 626.0 L643.1 625.8 L642.2 625.6 L641.3 625.5 L640.3 625.4 L639.4 625.4 L638.5 625.5 L637.6 625.6 L636.8 625.8 L635.9 626.1 L635.1 626.5 L634.4 626.9 L633.6 627.4 L632.9 628.0 L632.3 628.6 L631.7 629.2 L631.2 629.8 L630.8 630.5 L630.4 631.2 L630.2 632.0 L630.1 632.8 L630.2 633.6 L630.3 634.4 L630.5 635.1 L630.8 635.8 L631.0 636.4 L631.3 637.0 L631.7 637.5 L632.0 638.0 L632.6 638.4 L633.2 638.6 L633.8 638.8 L634.3 638.8 L634.8 638.7 L635.3 638.7 L635.7 638.6 L636.1 638.5 L636.4 638.5 L636.5 638.5 L636.5 636.5 L636.2 636.5 L635.8 636.5 L635.5 636.6 L635.1 636.6 L634.7 636.6 L634.3 636.6 L634.1 636.6 L633.9 636.5 L633.8 636.5 L633.8 636.4 L633.7 636.2 L633.5 635.9 L633.3 635.4 L633.2 634.9 L633.1 634.4 L633.0 633.9 L633.0 633.4 L633.0 633.0 L633.1 632.6 L633.2 632.4 L633.4 632.1 L633.7 631.7 L634.0 631.3 L634.5 630.9 L635.0 630.5 L635.5 630.1 L636.1 629.8 L636.6 629.5 L637.2 629.3 L637.6 629.2 L638.1 629.1 L638.7 629.1 L639.4 629.1 L640.0 629.2 L640.7 629.3 L641.4 629.5 L642.0 629.7 L642.6 629.9 L643.1 630.2 L643.6 630.4 L644.0 630.8 L644.5 631.2 L644.9 631.7 L645.4 632.2 L645.8 632.8 L646.2 633.4 L646.5 634.0 L646.7 634.5 L646.9 635.1 L647.0 635.6 L647.0 636.1 L647.0 636.7 L647.0 637.3 L646.9 638.0 L646.7 638.7 L646.5 639.4 L646.3 640.1 L646.0 640.8 L645.6 641.5 L645.3 642.1 L644.9 642.8 L644.4 643.5 L643.8 644.2 L643.2 644.9 L642.5 645.6 L641.8 646.2 L641.0 646.8 L640.3 647.4 L639.6 647.8 L638.9 648.2 L638.1 648.6 L637.3 648.9 L636.4 649.2 L635.5 649.4 L634.6 649.6 L633.6 649.8 L632.7 649.9 L631.8 649.9 L630.9 649.9 L630.0 649.8 L629.2 649.7 L628.3 649.5 L627.4 649.2 L626.5 648.9 L625.5 648.5 L624.6 648.1 L623.7 647.6 L622.8 647.1 L621.9 646.5 L621.1 646.0 L620.4 645.4 L619.6 644.8 L618.9 644.1 L618.2 643.4 L617.5 642.6 L616.9 641.9 L616.3 641.1 L615.8 640.3 L615.3 639.5 L614.9 638.7 L614.5 637.8 L614.2 636.9 L613.9 636.0 L613.6 634.9 L613.4 633.8 L613.2 632.7 L613.1 631.6 L612.9 630.5 L612.9 629.5 L612.8 628.4 L612.8 627.4 L612.8 626.4 L612.8 625.5 L612.8 624.6 L612.9 623.7 L613.1 622.8 L613.2 622.0 L613.5 621.2 L613.7 620.3 L614.1 619.5 L614.5 618.5 L615.0 617.6 L615.5 616.6 L616.1 615.6 L616.8 614.6 L617.5 613.6 L618.2 612.7 L619.0 611.8 L619.8 610.9 L620.6 610.2 L621.4 609.4 L622.4 608.7 L623.4 608.0 L624.4 607.3 L625.5 606.7 L626.7 606.0 L627.8 605.4 L629.0 604.9 L630.1 604.4 L631.2 603.9 L632.3 603.5 L633.3 603.1 L634.3 602.8 L635.4 602.5 L636.4 602.3 L637.4 602.1 L638.5 601.9 L639.6 601.7 L640.7 601.6 L641.8 601.5 L643.0 601.4 L644.1 601.4 L645.3 601.3 L646.5 601.4 L647.8 601.4 L649.0 601.5 L650.2 601.6 L651.4 601.7 L652.6 601.8 L653.8 602.0 L654.9 602.1 L656.0 602.3 L656.9 602.4 L657.8 602.6 L658.6 602.7 L659.5 603.0 L660.3 603.2 L661.2 603.5 L662.2 603.9 L663.2 604.4 L664.5 605.0 L665.9 605.9 L667.5 606.8 L669.2 607.9 L670.9 609.0 L672.6 610.1 L674.1 611.2 L675.6 612.2 L676.8 613.0 L677.7 613.6ZM636.5 637.5 m-1.0 0 a1.0 1.0 0 1 0 2.0 0 a1.0 1.0 0 1 0 -2.0 0Z"/>
</defs>
<rect width="1120" height="839" fill="url(#bg)"/><rect width="1120" height="839" fill="url(#vg)"/>
<rect width="1120" height="839" fill="url(#g1)"/><rect width="1120" height="839" fill="url(#g2)"/>
<rect width="1120" height="839" filter="url(#noise)" opacity="0.07" style="mix-blend-mode:soft-light"/>
<g fill="none" filter="url(#soft)" stroke-linecap="round"><path d="M989 40 C1015 80 1040 135 1055 180 C1070 230 1078 290 1082 340 C1086 385 1080 400 1057 417 C1030 436 990 455 940 468" stroke="url(#sw1)" stroke-width="15"/><path d="M797 425 C790 365 805 310 823 283 C850 245 890 220 955 214" stroke="url(#sw2)" stroke-width="9"/><path d="M838 580 C815 535 800 480 797 425" stroke="#fff" stroke-opacity="0.10" stroke-width="10"/></g>
<use href="#spd" fill="#e8f1fb" filter="url(#glow)" opacity="0.5"/>
<use href="#spd" fill="#c9d6e9"/>
<use href="#sp" fill="#e8f1fb" filter="url(#glow)" opacity="0.68"/>
<rect width="1120" height="839" fill="#ecf2fa" mask="url(#sw)"/>
<use href="#sp" fill="#ecf2fa"/>
<g transform="translate(855.7 343.8) rotate(12.0) scale(1.049)" fill="#e9eff8" opacity="1.00"><path transform="rotate(0) scale(1.00 1)" d="M0 1 C-1.5 -6 -13 -13.5 -14 -27 C-14.7 -36.5 -7 -41.5 0 -41.5 C7 -41.5 14.7 -36.5 14 -27 C13 -13.5 1.5 -6 0 1Z"/><path transform="rotate(72) scale(1.00 1)" d="M0 1 C-1.5 -6 -13 -13.5 -14 -27 C-14.7 -36.5 -7 -41.5 0 -41.5 C7 -41.5 14.7 -36.5 14 -27 C13 -13.5 1.5 -6 0 1Z"/><path transform="rotate(144) scale(1.00 1)" d="M0 1 C-1.5 -6 -13 -13.5 -14 -27 C-14.7 -36.5 -7 -41.5 0 -41.5 C7 -41.5 14.7 -36.5 14 -27 C13 -13.5 1.5 -6 0 1Z"/><path transform="rotate(216) scale(1.00 1)" d="M0 1 C-1.5 -6 -13 -13.5 -14 -27 C-14.7 -36.5 -7 -41.5 0 -41.5 C7 -41.5 14.7 -36.5 14 -27 C13 -13.5 1.5 -6 0 1Z"/><path transform="rotate(288) scale(1.00 1)" d="M0 1 C-1.5 -6 -13 -13.5 -14 -27 C-14.7 -36.5 -7 -41.5 0 -41.5 C7 -41.5 14.7 -36.5 14 -27 C13 -13.5 1.5 -6 0 1Z"/><circle r="9"/></g>
<g transform="translate(855.7 343.8) rotate(12.0) scale(1.024)" fill="#2a62a6"><path transform="rotate(0)" d="M0 -5.5 C-2 -8 -4.2 -10.5 -4.2 -13 C-4.2 -17.6 4.2 -17.6 4.2 -13 C4.2 -10.5 2 -8 0 -5.5Z"/><path transform="rotate(72)" d="M0 -5.5 C-2 -8 -4.2 -10.5 -4.2 -13 C-4.2 -17.6 4.2 -17.6 4.2 -13 C4.2 -10.5 2 -8 0 -5.5Z"/><path transform="rotate(144)" d="M0 -5.5 C-2 -8 -4.2 -10.5 -4.2 -13 C-4.2 -17.6 4.2 -17.6 4.2 -13 C4.2 -10.5 2 -8 0 -5.5Z"/><path transform="rotate(216)" d="M0 -5.5 C-2 -8 -4.2 -10.5 -4.2 -13 C-4.2 -17.6 4.2 -17.6 4.2 -13 C4.2 -10.5 2 -8 0 -5.5Z"/><path transform="rotate(288)" d="M0 -5.5 C-2 -8 -4.2 -10.5 -4.2 -13 C-4.2 -17.6 4.2 -17.6 4.2 -13 C4.2 -10.5 2 -8 0 -5.5Z"/></g>
<g transform="translate(648.8 538.8) rotate(8.0) scale(0.878)" fill="#c9d7ea" opacity="1.00"><path transform="rotate(0) scale(1.00 1)" d="M0 1 C-1.5 -6 -13 -13.5 -14 -27 C-14.7 -36.5 -7 -41.5 0 -41.5 C7 -41.5 14.7 -36.5 14 -27 C13 -13.5 1.5 -6 0 1Z"/><path transform="rotate(72) scale(1.00 1)" d="M0 1 C-1.5 -6 -13 -13.5 -14 -27 C-14.7 -36.5 -7 -41.5 0 -41.5 C7 -41.5 14.7 -36.5 14 -27 C13 -13.5 1.5 -6 0 1Z"/><path transform="rotate(144) scale(1.00 1)" d="M0 1 C-1.5 -6 -13 -13.5 -14 -27 C-14.7 -36.5 -7 -41.5 0 -41.5 C7 -41.5 14.7 -36.5 14 -27 C13 -13.5 1.5 -6 0 1Z"/><path transform="rotate(216) scale(1.00 1)" d="M0 1 C-1.5 -6 -13 -13.5 -14 -27 C-14.7 -36.5 -7 -41.5 0 -41.5 C7 -41.5 14.7 -36.5 14 -27 C13 -13.5 1.5 -6 0 1Z"/><path transform="rotate(288) scale(1.00 1)" d="M0 1 C-1.5 -6 -13 -13.5 -14 -27 C-14.7 -36.5 -7 -41.5 0 -41.5 C7 -41.5 14.7 -36.5 14 -27 C13 -13.5 1.5 -6 0 1Z"/><circle r="9"/></g>
<g transform="translate(648.8 538.8) rotate(8.0) scale(0.866)" fill="#27589a"><path transform="rotate(0)" d="M0 -5.5 C-2 -8 -4.2 -10.5 -4.2 -13 C-4.2 -17.6 4.2 -17.6 4.2 -13 C4.2 -10.5 2 -8 0 -5.5Z"/><path transform="rotate(72)" d="M0 -5.5 C-2 -8 -4.2 -10.5 -4.2 -13 C-4.2 -17.6 4.2 -17.6 4.2 -13 C4.2 -10.5 2 -8 0 -5.5Z"/><path transform="rotate(144)" d="M0 -5.5 C-2 -8 -4.2 -10.5 -4.2 -13 C-4.2 -17.6 4.2 -17.6 4.2 -13 C4.2 -10.5 2 -8 0 -5.5Z"/><path transform="rotate(216)" d="M0 -5.5 C-2 -8 -4.2 -10.5 -4.2 -13 C-4.2 -17.6 4.2 -17.6 4.2 -13 C4.2 -10.5 2 -8 0 -5.5Z"/><path transform="rotate(288)" d="M0 -5.5 C-2 -8 -4.2 -10.5 -4.2 -13 C-4.2 -17.6 4.2 -17.6 4.2 -13 C4.2 -10.5 2 -8 0 -5.5Z"/></g>
<g transform="translate(891.4 475.5) rotate(10.0) scale(0.512)" fill="#e9eff8" opacity="1.00"><path transform="rotate(0) scale(0.95 1)" d="M0 1 C-1.5 -6 -13 -13.5 -14 -27 C-14.7 -36.5 -7 -41.5 0 -41.5 C7 -41.5 14.7 -36.5 14 -27 C13 -13.5 1.5 -6 0 1Z"/><path transform="rotate(72) scale(0.95 1)" d="M0 1 C-1.5 -6 -13 -13.5 -14 -27 C-14.7 -36.5 -7 -41.5 0 -41.5 C7 -41.5 14.7 -36.5 14 -27 C13 -13.5 1.5 -6 0 1Z"/><path transform="rotate(144) scale(0.95 1)" d="M0 1 C-1.5 -6 -13 -13.5 -14 -27 C-14.7 -36.5 -7 -41.5 0 -41.5 C7 -41.5 14.7 -36.5 14 -27 C13 -13.5 1.5 -6 0 1Z"/><path transform="rotate(216) scale(0.95 1)" d="M0 1 C-1.5 -6 -13 -13.5 -14 -27 C-14.7 -36.5 -7 -41.5 0 -41.5 C7 -41.5 14.7 -36.5 14 -27 C13 -13.5 1.5 -6 0 1Z"/><path transform="rotate(288) scale(0.95 1)" d="M0 1 C-1.5 -6 -13 -13.5 -14 -27 C-14.7 -36.5 -7 -41.5 0 -41.5 C7 -41.5 14.7 -36.5 14 -27 C13 -13.5 1.5 -6 0 1Z"/><circle r="9"/></g>
<g transform="translate(891.4 475.5) rotate(10.0) scale(0.537)" fill="#2c66a9"><path transform="rotate(0)" d="M0 -5.5 C-2 -8 -4.2 -10.5 -4.2 -13 C-4.2 -17.6 4.2 -17.6 4.2 -13 C4.2 -10.5 2 -8 0 -5.5Z"/><path transform="rotate(72)" d="M0 -5.5 C-2 -8 -4.2 -10.5 -4.2 -13 C-4.2 -17.6 4.2 -17.6 4.2 -13 C4.2 -10.5 2 -8 0 -5.5Z"/><path transform="rotate(144)" d="M0 -5.5 C-2 -8 -4.2 -10.5 -4.2 -13 C-4.2 -17.6 4.2 -17.6 4.2 -13 C4.2 -10.5 2 -8 0 -5.5Z"/><path transform="rotate(216)" d="M0 -5.5 C-2 -8 -4.2 -10.5 -4.2 -13 C-4.2 -17.6 4.2 -17.6 4.2 -13 C4.2 -10.5 2 -8 0 -5.5Z"/><path transform="rotate(288)" d="M0 -5.5 C-2 -8 -4.2 -10.5 -4.2 -13 C-4.2 -17.6 4.2 -17.6 4.2 -13 C4.2 -10.5 2 -8 0 -5.5Z"/></g>
<g transform="translate(765.0 447.9) rotate(8.0) scale(0.215)" fill="#dfe8f4" opacity="1.00"><path transform="rotate(0) scale(0.85 1)" d="M0 1 C-1.5 -6 -13 -13.5 -14 -27 C-14.7 -36.5 -7 -41.5 0 -41.5 C7 -41.5 14.7 -36.5 14 -27 C13 -13.5 1.5 -6 0 1Z"/><path transform="rotate(72) scale(0.85 1)" d="M0 1 C-1.5 -6 -13 -13.5 -14 -27 C-14.7 -36.5 -7 -41.5 0 -41.5 C7 -41.5 14.7 -36.5 14 -27 C13 -13.5 1.5 -6 0 1Z"/><path transform="rotate(144) scale(0.85 1)" d="M0 1 C-1.5 -6 -13 -13.5 -14 -27 C-14.7 -36.5 -7 -41.5 0 -41.5 C7 -41.5 14.7 -36.5 14 -27 C13 -13.5 1.5 -6 0 1Z"/><path transform="rotate(216) scale(0.85 1)" d="M0 1 C-1.5 -6 -13 -13.5 -14 -27 C-14.7 -36.5 -7 -41.5 0 -41.5 C7 -41.5 14.7 -36.5 14 -27 C13 -13.5 1.5 -6 0 1Z"/><path transform="rotate(288) scale(0.85 1)" d="M0 1 C-1.5 -6 -13 -13.5 -14 -27 C-14.7 -36.5 -7 -41.5 0 -41.5 C7 -41.5 14.7 -36.5 14 -27 C13 -13.5 1.5 -6 0 1Z"/><circle r="9"/></g>
<g transform="translate(765.0 447.9) rotate(8.0) scale(0.232)" fill="#2a60a3"><path transform="rotate(0)" d="M0 -5.5 C-2 -8 -4.2 -10.5 -4.2 -13 C-4.2 -17.6 4.2 -17.6 4.2 -13 C4.2 -10.5 2 -8 0 -5.5Z"/><path transform="rotate(72)" d="M0 -5.5 C-2 -8 -4.2 -10.5 -4.2 -13 C-4.2 -17.6 4.2 -17.6 4.2 -13 C4.2 -10.5 2 -8 0 -5.5Z"/><path transform="rotate(144)" d="M0 -5.5 C-2 -8 -4.2 -10.5 -4.2 -13 C-4.2 -17.6 4.2 -17.6 4.2 -13 C4.2 -10.5 2 -8 0 -5.5Z"/><path transform="rotate(216)" d="M0 -5.5 C-2 -8 -4.2 -10.5 -4.2 -13 C-4.2 -17.6 4.2 -17.6 4.2 -13 C4.2 -10.5 2 -8 0 -5.5Z"/><path transform="rotate(288)" d="M0 -5.5 C-2 -8 -4.2 -10.5 -4.2 -13 C-4.2 -17.6 4.2 -17.6 4.2 -13 C4.2 -10.5 2 -8 0 -5.5Z"/></g>
<!--/WALL-->
</svg></div>
<div id="xptitle" class="abs">
<svg class="abs" style="left:5px;top:7px" width="12.5" height="11" viewBox="0 0 13 13" preserveAspectRatio="none"><rect width="13" height="13" fill="#c8102e"/><rect x="2.5" y="1.5" width="2" height="10" fill="#7a1a5a"/><rect x="5.5" y="1.5" width="2" height="10" fill="#5a2a8a"/><rect x="8.5" y="1.5" width="2" height="10" fill="#7a1a5a"/></svg>
<div class="t abs">NX - 5410grader@ams1.boisestate.edu:1000 - AMS</div>
<div class="xb abs" style="left:1057px;border-color:#cfdcfa;background:linear-gradient(135deg,#4a7df0,#2a5ce0 50%,#1f4fd0);"><div class="abs" style="left:4px;top:11px;width:6px;height:2px;background:#fff"></div></div>
<div class="xb abs" style="left:1077px;border-color:#5a86ea;background:linear-gradient(135deg,#2f66ea,#1f54dc);"><div class="abs" style="left:4px;top:4px;width:8px;height:7px;box-sizing:border-box;border:1px solid #4a78e6;border-top-width:2px"></div></div>
<div class="xb abs" style="left:1098px;border-color:#f4d8cc;background:linear-gradient(135deg,#ec8a66,#dc5428 45%,#c63a12);"><svg class="abs" style="left:2px;top:2px" width="12" height="12" viewBox="0 0 12 12"><path d="M2 2L10 10M10 2L2 10" stroke="#fff" stroke-width="1.8" stroke-linecap="round"/></svg></div>
</div>
<div id="frameL" class="abs"></div><div id="frameR" class="abs"></div><div id="frameB" class="abs"></div>

<div id="ptop" class="abs">
<svg class="abs" style="left:7px;top:2px" width="17" height="17" viewBox="0 0 17 17"><g><circle cx="5.5" cy="4.5" r="2.6" fill="#9ccb3b"/><circle cx="10.5" cy="4" r="2.4" fill="#c2247c"/><circle cx="13" cy="8" r="2.3" fill="#7a3b98"/><circle cx="10.5" cy="12.5" r="2.5" fill="#f2d21f"/><circle cx="5" cy="12" r="2.6" fill="#4a3a8a"/><circle cx="3.2" cy="8" r="2" fill="#5a4a9a"/><circle cx="8" cy="8.3" r="1.8" fill="#f0e8e0"/></g></svg>
<div class="ptxt abs" style="left:28px">Applications</div>
<div class="ptxt abs" style="left:106.5px">Places</div>
<div class="ptxt abs" style="left:155px">System</div>
<!-- launcher icons -->
<svg class="abs" style="left:204px;top:1px" width="130" height="20" viewBox="0 0 130 20">
 <!-- terminal -->
 <path d="M2 4.5L18.5 1.5L18.5 15.5L2.5 18.5Z" fill="#d8d8d0" stroke="#3a3a3a" stroke-width="1"/><path d="M4 6L16.8 3.7L16.8 14L4.3 16.3Z" fill="#1c3468"/><path d="M6 10.5l2.5 0M9.5 10l2 -0.3" stroke="#cfe0ff" stroke-width="1"/>
 <!-- browser -->
 <g transform="translate(-1.2 0)">
 <circle cx="31" cy="9" r="7" fill="#1f5a4a" stroke="#16302a" stroke-width="1"/><path d="M26 6c3-3 8-3 10 0c-2 2-7 3-10 0z" fill="#3d8f5f"/><ellipse cx="35" cy="13.5" rx="6.5" ry="4.2" fill="#f4f4f4" stroke="#333" stroke-width="1" transform="rotate(-18 35 13.5)"/><path d="M32 11.5l6 -1.6" stroke="#555" stroke-width=".8"/></g>
 <!-- mail -->
 <g transform="translate(-1 0)">
 <path d="M44 11L55 4L63 9L53 17.5Z" fill="#e0b86a" stroke="#5a4424" stroke-width="1"/><path d="M51 4.5L58 2L61.5 6.5L55 9.5Z" fill="#e8e8f0" stroke="#555" stroke-width=".8"/><rect x="54.5" y="4" width="4" height="3" fill="#5a82c0" transform="rotate(-20 56 5)"/><path d="M44 11L53 12.5L63 9" fill="none" stroke="#8a6a34" stroke-width=".8"/></g>
 <!-- writer -->
 <g transform="translate(-1.6 0)">
 <path d="M66 6L78 2L84 8L72 13Z" fill="#f2f2f2" stroke="#444" stroke-width=".9"/><path d="M65 9.5L77 5.5L84 11.5L72 16.5Z" fill="#e2e2e2" stroke="#444" stroke-width=".9"/><path d="M68 12l12 6.5" stroke="#222" stroke-width="1.8" stroke-linecap="round"/><path d="M69 9l8-3M71 11l8-3" stroke="#999" stroke-width=".7"/></g>
 <!-- impress -->
 <g transform="translate(-3.2 0)">
 <path d="M92 2L105 3L105 11L92 10Z" fill="#4a4440" stroke="#2a2420" stroke-width=".8"/><rect x="94" y="3.5" width="2.5" height="5.5" fill="#c04030"/><rect x="97.5" y="3.8" width="2.5" height="5.5" fill="#70a040"/><rect x="101" y="4" width="2.5" height="5.5" fill="#8060a8"/><path d="M87 12L99 8.5L105 14L93 18.5Z" fill="#f0f0f0" stroke="#444" stroke-width=".9"/><path d="M90 12.3L98.5 10L102.5 13.8L93.5 16.8Z" fill="#4f9ae0"/></g>
 <!-- calc -->
 <g transform="translate(-4 0)">
 <path d="M109 6L122 1.5L128 7L116 12Z" fill="#d4d4d4" stroke="#555" stroke-width=".9"/><path d="M112 6.5l11-3.8M114.5 8.5l11-4" stroke="#f6f6f6" stroke-width=".8"/><circle cx="116" cy="12.5" r="5.6" fill="#3d6fb0" stroke="#24384f" stroke-width=".9"/><path d="M116 12.5L116 6.9A5.6 5.6 0 0 1 121.4 11Z" fill="#e0703a"/></g>
</svg>
<!-- grip -->
<div class="abs" style="left:1029px;top:1px;width:5px;height:19px;background:repeating-linear-gradient(#d6cfc6 0,#d6cfc6 1px,#f6f3ef 1px,#f6f3ef 2px);"></div>
<div class="ptxt abs" style="left:1044.5px;font-size:11.2px">9:33 PM</div>
<svg class="abs" style="left:1092px;top:1px" width="20" height="20" viewBox="0 0 20 20"><path d="M2.2 8.8L9.8 2.6L11.2 14.8Z" fill="#cfcfcf" stroke="#2e3436" stroke-width="1.2" stroke-linejoin="round"/><path d="M9.8 2.6L11.2 14.8" stroke="#555" stroke-width="1.4"/><circle cx="13.6" cy="12.9" r="2.2" fill="#f6d0c8" stroke="#8a1818" stroke-width="1.1"/></svg>
</div>

<!-- desktop icons -->
<svg class="abs" style="left:56px;top:66px" width="48" height="40" viewBox="56 66 48 40">
 <ellipse cx="73" cy="96.5" rx="9.6" ry="4.2" fill="#0d1f45" opacity=".55"/>
 <path d="M64.8 76.2L88 71.2L89 91L65.6 95Z" fill="#0d1f45" opacity=".6"/>
 <path d="M88.3 76.6L96.8 83.2L96.8 99.2L87.2 99.8Z" fill="#0d1f45" opacity=".5"/>
 <path d="M88.6 77.5L96.1 83.4L96.1 98.5L87.5 99Z" fill="#e9e9ea"/><path d="M88.6 77.5L96.1 83.4L96.1 98.5L92 98.8L92 80Z" fill="#d6d6d8"/>
 <rect x="93" y="88" width="2" height="1" fill="#9a9a9a"/><rect x="94" y="95.5" width="1.2" height="1.2" fill="#7a9a5a"/>
 <ellipse cx="72.5" cy="96.2" rx="9.2" ry="3.9" fill="#ecebe8"/><ellipse cx="72.5" cy="95.4" rx="7" ry="2.4" fill="#d8d4c8"/>
 <path d="M65.5 76.5L87.5 71.9L88.3 90.4L66.1 94.2Z" fill="#f1f2f4"/>
 <path d="M69.6 79.7L84.9 76.2L85.4 87.7L70.1 90.4Z" fill="#8fc1ef"/><path d="M69.6 79.7L77 78L78 89L70.1 90.4Z" fill="#c3dcf5" opacity=".8"/>
</svg>
<div class="dlabel abs" style="left:-20px;top:110px">Computer</div>

<svg class="abs" style="left:56px;top:136px" width="48" height="42" viewBox="56 136 48 42">
 <path d="M63.4 142.6L74.4 141L76.6 144L91.8 141.6L93.2 148L96.9 147.3L95.8 162.5L97 174.4L84.4 177L76 172.2L66 172.4Z" fill="#0d1f45" opacity=".6"/>
 <path d="M64.2 143.3L74.1 141.9L76.3 144.9L91.3 142.5L92.4 150L67 171.1L66.1 171.1Z" fill="#e9c98a"/>
 <path d="M64.2 143.3L66 143L67.6 170.5L66.1 171.1Z" fill="#f8ecd2"/>
 <path d="M67.7 154.5C72 152 90 149 96.1 148.1L95 162L86 171.1L67.7 171.1Z" fill="#f3dcae"/>
 <path d="M77.3 164L84.3 166.9L95.6 163L96.1 173.6L84.3 176.2L77.3 171.4Z" fill="#d9621c"/><path d="M84.3 166.9L84.3 176.2L77.3 171.4L77.3 164Z" fill="#b84a12"/>
 <path d="M76.3 161L83.2 154.5L92.9 162L84.3 166.9Z" fill="#7f8c9c" stroke="#26221e" stroke-width="1" stroke-linejoin="round"/>
 <path d="M83.2 154.5L96.4 163.4" stroke="#26221e" stroke-width="1.3"/>
 <rect x="88.4" y="168.4" width="2.6" height="4.2" fill="#fff"/><rect x="92.6" y="167" width="1.6" height="5" fill="#f0d0b8"/>
</svg>
<div class="dlabel abs" style="left:-20px;top:180px">5410grader's Home</div>

<svg class="abs" style="left:56px;top:206px" width="48" height="42" viewBox="56 206 48 42">
 <path d="M65.4 219C65.4 209 94.2 209 94.2 219L88.6 241.5C86 245.2 73 245.2 70.6 241.5Z" fill="#0d1f45" opacity=".55"/>
 <path d="M66.6 219.7L71.2 240.6C73.5 243.6 85.5 243.6 87.6 240.6L93 219.7Z" fill="#dededd"/>
 <path d="M66.6 219.7L71.2 240.6C72 241.8 74 242.4 76 242.6L72 221Z" fill="#eef0f2"/>
 <ellipse cx="79.8" cy="219.7" rx="13.2" ry="7.3" fill="#d2d1cf" stroke="#c3d2e4" stroke-width="1.6"/>
 <path d="M67 222.5C72 228.5 88 228.5 92.6 222.5" fill="none" stroke="#8a99ac" stroke-width="1.4"/>
</svg>
<div class="dlabel abs" style="left:-20px;top:250px">Trash</div>

<!-- terminal window -->
<div id="win" class="abs">
 <div id="wtitle" class="abs">
  <svg class="abs" style="left:5px;top:3px" width="13" height="12" viewBox="0 0 13 12"><rect x=".5" y=".5" width="12" height="10" rx="1" fill="#b8b4a8" stroke="#2a3540"/><rect x="2" y="2" width="9" height="6.5" fill="#26221e"/><rect x="3" y="4" width="5" height="1.2" fill="#d0a060"/><rect x="3" y="6" width="3" height="1" fill="#c06030"/></svg>
  <div class="t abs">5410grader@ams1:~/ece510</div>
  <div class="wb abs" style="left:408.8px"><div class="abs" style="left:2.5px;top:8.5px;width:8px;height:2px;background:#fff;box-shadow:0 1px 0 rgba(20,60,120,.5)"></div></div>
  <div class="wb abs" style="left:425.5px"><div class="abs" style="left:3px;top:2px;width:8px;height:9px;box-sizing:border-box;border:1.5px solid #fff;border-top-width:3px"></div></div>
  <div class="wb abs" style="left:443px"><svg class="abs" style="left:2px;top:2px" width="10" height="10" viewBox="0 0 10 10"><path d="M1.5 1.5L8.5 8.5M8.5 1.5L1.5 8.5" stroke="#fff" stroke-width="2.2"/></svg></div>
 </div>
 <div id="wmenu" class="abs"><span style="left:10px"><u>F</u>ile</span><span style="left:39.5px"><u>E</u>dit</span><span style="left:72px"><u>V</u>iew</span><span style="left:111.5px"><u>T</u>erminal</span><span style="left:172px">Ta<u>b</u>s</span><span style="left:208.5px"><u>H</u>elp</span></div>
 <div id="term" class="abs"><pre>[5410grader@ams1 ~]$ source .bashrc
[5410grader@ams1 ~]$ cd ece510
[5410grader@ams1 ece510]$ virtuoso &amp;<span style="background:#000">&nbsp;</span></pre></div>
 <div id="sb" class="abs">
  <div class="abs" style="left:1px;top:0;width:12px;height:256px;box-sizing:border-box;border:1px solid #8f877c;border-radius:3px;background:linear-gradient(90deg,#f4f1ed,#e9e4de);"></div>
  <div class="abs" style="left:1px;top:13px;width:12px;height:1px;background:#8f877c"></div>
  <div class="abs" style="left:1px;top:242px;width:12px;height:1px;background:#8f877c"></div>
  <svg class="abs" style="left:3px;top:4px" width="8" height="5" viewBox="0 0 8 5"><path d="M0 4.5L4 0.5L8 4.5Z" fill="#9a958d"/></svg>
  <svg class="abs" style="left:3px;top:247px" width="8" height="5" viewBox="0 0 8 5"><path d="M0 0.5L4 4.5L8 0.5Z" fill="#9a958d"/></svg>
  <div class="abs" style="left:4px;top:125px;width:6px;height:1px;background:#9a958d;box-shadow:0 2px 0 #9a958d,0 4px 0 #9a958d"></div>
 </div>
</div>

<!-- bottom panel -->
<div id="pbot" class="abs">
<div class="abs" style="left:1px;top:2px;width:20px;height:19px;box-sizing:border-box;border:1px solid #b9b2a8;border-radius:2px;background:#e6e1da"></div>
<svg class="abs" style="left:3px;top:4px" width="16" height="15" viewBox="0 0 16 15"><path d="M1.5 7L8.5 2L14.5 5L7.5 10.5Z" fill="#5a6e82" stroke="#222" stroke-width="1"/><path d="M1.5 9.5L7.5 13L14.5 7.5" fill="none" stroke="#222" stroke-width="1.6"/><path d="M1.5 7L7.5 10.5L7.5 13L1.5 9.5Z" fill="#d8d8d8"/></svg>
<div class="abs" style="left:24px;top:3px;width:4px;height:17px;background:repeating-linear-gradient(#d6cfc6 0,#d6cfc6 1px,#f6f3ef 1px,#f6f3ef 2px);"></div>
<div class="abs" style="left:30px;top:2px;width:239px;height:19px;box-sizing:border-box;background:#d8d2ca;border:1px solid #857e75;border-radius:3px;box-shadow:inset 1px 1px 0 #c4bdb4;"></div>
<svg class="abs" style="left:37px;top:5px" width="13" height="12" viewBox="0 0 13 12"><rect x=".5" y=".5" width="12" height="10" rx="1" fill="#b8b4a8" stroke="#2a3540"/><rect x="2" y="2" width="9" height="6.5" fill="#3a3a3a"/><rect x="3" y="4" width="5" height="1.2" fill="#aaa"/></svg>
<div class="abs" style="left:56px;top:4px;font-size:11.25px;line-height:15px;color:#111;white-space:nowrap;">5410grader@ams1:~/ece510</div>
<!-- workspace switcher -->
<div class="abs" style="left:996px;top:3px;width:97px;height:18px;background:#b4a591;"></div>
<div class="abs" style="left:996px;top:3px;width:24px;height:18px;background:#3f6ea6;"></div>
<div class="abs" style="left:1000px;top:7px;width:10px;height:7px;box-sizing:border-box;border:1px solid #e6eefb;background:#9db9de;"></div>
<div class="abs" style="left:1020px;top:3px;width:1px;height:18px;background:#d9cdb9"></div>
<div class="abs" style="left:1044px;top:3px;width:1px;height:18px;background:#d9cdb9"></div>
<div class="abs" style="left:1069px;top:3px;width:1px;height:18px;background:#d9cdb9"></div>
<div class="abs" style="left:1097px;top:3px;width:16px;height:18px;box-sizing:border-box;border:1px solid #2a4a80;border-radius:2px;background:linear-gradient(#3f6ab0,#3a62a8 30%,#4a78c0 35%,#3c68b2);"></div>
</div>

</body>
</html>
